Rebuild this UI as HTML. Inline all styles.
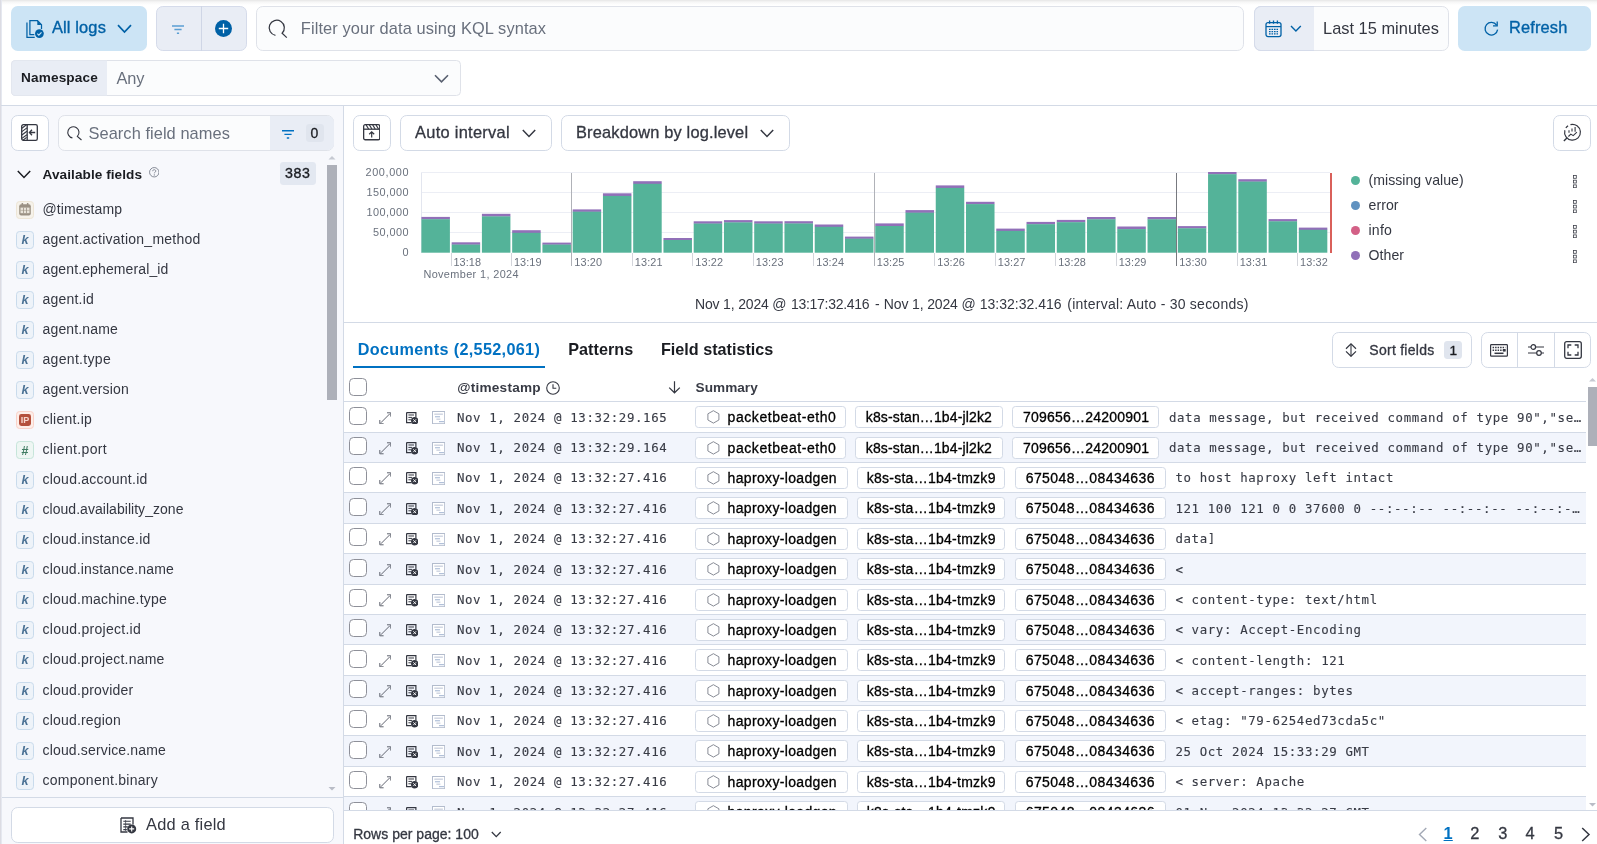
<!DOCTYPE html>
<html lang="en"><head><meta charset="utf-8"><title>Discover - Logs Explorer</title>
<style>
html,body{margin:0;padding:0;}
body{width:1597px;height:844px;position:relative;overflow:hidden;background:#fff;font-family:"Liberation Sans",sans-serif;}
.b{position:absolute;box-sizing:border-box;}
.t{position:absolute;white-space:nowrap;}
.s{font-family:"Liberation Sans",sans-serif;}
.m{font-family:"DejaVu Sans Mono","Liberation Mono",monospace;}
#root{position:absolute;left:0;top:0;width:1597px;height:844px;will-change:transform;}
</style></head><body><div id="root">
<div class="b" style="left:0.00px;top:0.00px;width:1597.00px;height:5.00px;background:linear-gradient(#e6e6e6,#f6f6f6 40%,#fff)"></div>
<div class="b" style="left:0.00px;top:0.00px;width:2.00px;height:844.00px;background:#e5e8f0"></div>
<div class="b" style="left:0.00px;top:0.00px;width:1.00px;height:844.00px;background:#dcdce3"></div>
<div class="b" style="left:11.00px;top:6.00px;width:136.00px;height:45.00px;background:#cce4f5;border-radius:6.75px"></div>
<svg class="b" style="left:25.50px;top:20.00px;" width="18.00" height="18.00" viewBox="0 0 18 18"><path d="M8.300 14.600H3.900V.7h7.600l4 4v4.300" fill="none" stroke="#0061a6" stroke-width="1.250"/><path d="M11.300 .8v4.100h4.100z" fill="#0061a6"/><path d="M.95 2.600v14.800h7.800" fill="none" stroke="#0061a6" stroke-width="1.250"/><circle cx="13.400" cy="13.600" r="4.400" fill="#0061a6"/><path d="M11.300 13.700l1.500 1.500 2.700-2.900" fill="none" stroke="#cce4f5" stroke-width="1.150"/></svg>
<div class="t s" style="left:52.00px;top:16.40px;font-size:16.40px;line-height:23px;letter-spacing:0.141px;font-weight:400;color:#0061a6;-webkit-text-stroke:0.35px #0061a6">All logs</div>
<svg class="b" style="left:116.50px;top:24.30px;" width="15.00" height="10.00" viewBox="0 0 15 10"><path d="M1 1.200l6.500 6.800 6.500-6.800" fill="none" stroke="#0061a6" stroke-width="1.700"/></svg>
<div class="b" style="left:156.00px;top:6.00px;width:91.00px;height:45.00px;background:#e9edf5;border:1px solid #d5dbea;border-radius:6.75px"></div>
<div class="b" style="left:201.00px;top:6.00px;width:1.00px;height:45.00px;background:#cfd6e6"></div>
<svg class="b" style="left:172.00px;top:25.00px;" width="12.00" height="9.50" viewBox="0 0 12 9.5"><path d="M0 .9h12M2.4 4.6h7.2M4.9 8.3h2.2" stroke="#5b9fd3" stroke-width="1.5" fill="none"/></svg>
<svg class="b" style="left:215.00px;top:20.00px;" width="17.00" height="17.00" viewBox="0 0 17 17"><circle cx="8.5" cy="8.5" r="8.5" fill="#0061a6"/><path d="M8.5 3.8v9.4M3.8 8.5h9.4" stroke="#fff" stroke-width="1.3"/></svg>
<div class="b" style="left:256.00px;top:6.00px;width:988.00px;height:45.00px;background:#fbfcfd;border:1px solid #dfe2e9;border-radius:6.75px"></div>
<svg class="b" style="left:266.00px;top:18.00px;" width="24.00" height="22.00" viewBox="0 0 24 22"><path d="M9.43 17.33A7.60 7.60 0 1 1 16.12 15.22L20.80 19.60" fill="none" stroke="#343741" stroke-width="1.25"/></svg>
<div class="t s" style="left:300.80px;top:16.60px;font-size:16.40px;line-height:23px;letter-spacing:0.110px;font-weight:400;color:#69707d;">Filter your data using KQL syntax</div>
<div class="b" style="left:1254.00px;top:6.00px;width:195.00px;height:45.00px;background:#fbfcfd;border:1px solid #dfe2e9;border-radius:6.75px"></div>
<div class="b" style="left:1254.00px;top:6.00px;width:60.00px;height:45.00px;background:#e9edf5;border:1px solid #d5dbea;border-right:none;border-radius:6.75px 0 0 6.75px"></div>
<svg class="b" style="left:1264.50px;top:19.50px;" width="17.00" height="18.00" viewBox="0 0 17 18"><rect x="1" y="2.6" width="15" height="14" rx="2" fill="none" stroke="#0061a6" stroke-width="1.3"/><path d="M1 6.6h15" stroke="#0061a6" stroke-width="1.2"/><path d="M4.6 .6v3.2M8.5 .6v3.2M12.4 .6v3.2" stroke="#0061a6" stroke-width="1.3"/><path d="M4 9.3h9M4 11.6h9M4 13.9h9" stroke="#0061a6" stroke-width="1.3" stroke-dasharray="1.6 0.9"/></svg>
<svg class="b" style="left:1290.00px;top:24.80px;" width="12.00" height="7.50" viewBox="0 0 12 7.500"><path d="M1 1l4.900 4.900L10.800 1" fill="none" stroke="#0061a6" stroke-width="1.400"/></svg>
<div class="t s" style="left:1323.00px;top:16.60px;font-size:16.40px;line-height:23px;letter-spacing:0.015px;font-weight:400;color:#343741;">Last 15 minutes</div>
<div class="b" style="left:1458.00px;top:6.00px;width:133.00px;height:45.00px;background:#cce4f5;border-radius:6.75px"></div>
<svg class="b" style="left:1483.00px;top:20.00px;" width="16.00" height="17.00" viewBox="0 0 16 17"><path d="M13.6 5.2A6.3 6.3 0 1 0 14.6 9.6" fill="none" stroke="#0061a6" stroke-width="1.3"/><path d="M14.2 1.6v4.2h-4.2" fill="none" stroke="#0061a6" stroke-width="1.3"/></svg>
<div class="t s" style="left:1509.00px;top:16.40px;font-size:16.40px;line-height:23px;letter-spacing:0.153px;font-weight:400;color:#0061a6;-webkit-text-stroke:0.35px #0061a6">Refresh</div>
<div class="b" style="left:11.00px;top:60.00px;width:450.00px;height:36.00px;background:#fbfcfd;border:1px solid #dfe2e9;border-radius:4.5px"></div>
<div class="b" style="left:11.00px;top:60.00px;width:96.00px;height:36.00px;background:#e9edf5;border-radius:4.5px 0 0 4.5px;border:1px solid #e3e7ef;border-right:none"></div>
<div class="t s" style="left:21.00px;top:68.00px;font-size:13.60px;line-height:19px;letter-spacing:0.155px;font-weight:700;color:#1a1c21;">Namespace</div>
<div class="t s" style="left:116.50px;top:66.50px;font-size:16.40px;line-height:23px;letter-spacing:-0.087px;font-weight:400;color:#69707d;">Any</div>
<svg class="b" style="left:434.40px;top:74.00px;" width="15.00" height="9.50" viewBox="0 0 15 9.500"><path d="M1 1.200l6.500 6.600 6.500-6.600" fill="none" stroke="#596070" stroke-width="1.600"/></svg>
<div class="b" style="left:1.00px;top:105.00px;width:1596.00px;height:1.00px;background:#d3dae6"></div>
<div class="b" style="left:2.00px;top:106.00px;width:341.00px;height:738.00px;background:#f7f8fc"></div>
<div class="b" style="left:343.00px;top:106.00px;width:1.00px;height:738.00px;background:#d3dae6"></div>
<div class="b" style="left:11.00px;top:115.00px;width:37.50px;height:36.00px;background:#fff;border:1px solid #d3dae6;border-radius:6.75px"></div>
<svg class="b" style="left:21.00px;top:124.00px;" width="17.00" height="17.00" viewBox="0 0 17 17"><rect x=".7" y=".7" width="15.6" height="15.6" rx="1.6" fill="none" stroke="#343741" stroke-width="1.3"/><path d="M6.2 .7v15.6" stroke="#343741" stroke-width="1.3"/><path d="M.9 4.2l4.6-3.4M.9 7.6l5-3.7M.9 11l5-3.7M.9 14.4l5-3.7M2 16.2l3.6-2.8" stroke="#343741" stroke-width="1.1"/><path d="M14.2 8.5H8.6M11 5.8L8.4 8.5l2.6 2.7" fill="none" stroke="#343741" stroke-width="1.3"/></svg>
<div class="b" style="left:58.00px;top:115.00px;width:276.00px;height:36.00px;background:#fbfcfd;border:1px solid #dfe2e9;border-radius:6.75px"></div>
<div class="b" style="left:270.00px;top:116.00px;width:63.50px;height:34.00px;background:#e9edf5;border-radius:0 6px 6px 0"></div>
<svg class="b" style="left:66.00px;top:124.00px;" width="18.00" height="18.00" viewBox="0 0 18 18"><path d="M6.43 13.91A5.60 5.60 0 1 1 11.36 12.36L15.50 16.00" fill="none" stroke="#343741" stroke-width="1.1"/></svg>
<div class="t s" style="left:88.50px;top:121.50px;font-size:16.40px;line-height:23px;letter-spacing:0.062px;font-weight:400;color:#69707d;">Search field names</div>
<svg class="b" style="left:282.00px;top:129.50px;" width="12.00" height="9.00" viewBox="0 0 12 9"><path d="M0 .8h12M2.4 4.4h7.2M4.8 8h2.4" stroke="#0071c2" stroke-width="1.4" fill="none"/></svg>
<div class="b" style="left:306.00px;top:124.00px;width:17.50px;height:18.00px;background:#e0e5ee;border-radius:3.4px"></div>
<div class="t s" style="left:310.50px;top:123.00px;font-size:14.00px;line-height:20px;letter-spacing:0.014px;font-weight:400;color:#1a1c21;-webkit-text-stroke:0.3px #1a1c21">0</div>
<svg class="b" style="left:17.00px;top:170.00px;" width="14.00" height="9.00" viewBox="0 0 14 9"><path d="M.8 1l6.2 6.4L13.2 1" fill="none" stroke="#1a1c21" stroke-width="1.5"/></svg>
<div class="t s" style="left:42.60px;top:164.80px;font-size:13.60px;line-height:19px;letter-spacing:0.062px;font-weight:700;color:#1a1c21;">Available fields</div>
<svg class="b" style="left:148.50px;top:167.00px;" width="10.50" height="10.50" viewBox="0 0 10.5 10.5"><circle cx="5.25" cy="5.25" r="4.7" fill="none" stroke="#69707d" stroke-width=".8"/><path d="M3.7 4.2c0-1 .7-1.5 1.6-1.5s1.5.6 1.5 1.4c0 1.100-1.500 1.100-1.500 2.200" fill="none" stroke="#69707d" stroke-width=".8"/><circle cx="5.3" cy="7.9" r=".55" fill="#69707d"/></svg>
<div class="b" style="left:280.00px;top:162.00px;width:36.00px;height:22.50px;background:#e3e8f1;border-radius:3.4px"></div>
<div class="t s" style="left:285.00px;top:163.10px;font-size:14.20px;line-height:20px;letter-spacing:0.602px;font-weight:400;color:#1a1c21;-webkit-text-stroke:0.35px #1a1c21">383</div>
<svg class="b" style="left:327.00px;top:154.30px;" width="10.00" height="6.00" viewBox="0 0 10 6"><path d="M1.5 5.5L5 2l3.500 3.500z" fill="#c6c9d2"/></svg>
<div class="b" style="left:327.30px;top:165.00px;width:9.70px;height:234.50px;background:#adb0b9"></div>
<svg class="b" style="left:327.00px;top:786.00px;" width="10.00" height="6.00" viewBox="0 0 10 6"><path d="M1.5 1L5 4.5 8.500 1z" fill="#b9bcc6"/></svg>
<div class="b" style="left:16.20px;top:201.05px;width:17.60px;height:17.60px;background:#f6f2ea;border:1px solid #ede5d6;border-radius:3.6px"></div>
<svg class="b" style="left:19.00px;top:203.25px;" width="12.00" height="12.60" viewBox="0 0 12 12.6"><rect x=".2" y="1.3" width="11.6" height="11.1" rx="2" fill="#9b9184"/><rect x="2.6" y="0" width="1.500" height="2.400" fill="#9b9184"/><rect x="7.900" y="0" width="1.500" height="2.400" fill="#9b9184"/><rect x="1.5" y="4.6" width="9" height="5.6" fill="#e9e4da"/><path d="M4.500 4.600v5.600M7.500 4.600v5.600" stroke="#9b9184" stroke-width=".8"/><path d="M1.5 7.4h9" stroke="#9b9184" stroke-width=".5"/></svg>
<div class="t s" style="left:42.50px;top:198.95px;font-size:14.00px;line-height:20px;letter-spacing:0.071px;font-weight:400;color:#343741;">@timestamp</div>
<div class="b" style="left:16.20px;top:231.05px;width:17.60px;height:17.60px;background:#eef3f9;border:1px solid #c9dbec;border-radius:3.6px"></div>
<div class="t s" style="left:21.60px;top:230.55px;font-size:12.60px;line-height:18px;letter-spacing:-0.408px;font-weight:700;color:#4a7194;font-style:italic">k</div>
<div class="t s" style="left:42.50px;top:228.95px;font-size:14.00px;line-height:20px;letter-spacing:0.237px;font-weight:400;color:#343741;">agent.activation_method</div>
<div class="b" style="left:16.20px;top:261.05px;width:17.60px;height:17.60px;background:#eef3f9;border:1px solid #c9dbec;border-radius:3.6px"></div>
<div class="t s" style="left:21.60px;top:260.55px;font-size:12.60px;line-height:18px;letter-spacing:-0.408px;font-weight:700;color:#4a7194;font-style:italic">k</div>
<div class="t s" style="left:42.50px;top:258.95px;font-size:14.00px;line-height:20px;letter-spacing:0.124px;font-weight:400;color:#343741;">agent.ephemeral_id</div>
<div class="b" style="left:16.20px;top:291.05px;width:17.60px;height:17.60px;background:#eef3f9;border:1px solid #c9dbec;border-radius:3.6px"></div>
<div class="t s" style="left:21.60px;top:290.55px;font-size:12.60px;line-height:18px;letter-spacing:-0.408px;font-weight:700;color:#4a7194;font-style:italic">k</div>
<div class="t s" style="left:42.50px;top:288.95px;font-size:14.00px;line-height:20px;letter-spacing:0.210px;font-weight:400;color:#343741;">agent.id</div>
<div class="b" style="left:16.20px;top:321.05px;width:17.60px;height:17.60px;background:#eef3f9;border:1px solid #c9dbec;border-radius:3.6px"></div>
<div class="t s" style="left:21.60px;top:320.55px;font-size:12.60px;line-height:18px;letter-spacing:-0.408px;font-weight:700;color:#4a7194;font-style:italic">k</div>
<div class="t s" style="left:42.50px;top:318.95px;font-size:14.00px;line-height:20px;letter-spacing:0.155px;font-weight:400;color:#343741;">agent.name</div>
<div class="b" style="left:16.20px;top:351.05px;width:17.60px;height:17.60px;background:#eef3f9;border:1px solid #c9dbec;border-radius:3.6px"></div>
<div class="t s" style="left:21.60px;top:350.55px;font-size:12.60px;line-height:18px;letter-spacing:-0.408px;font-weight:700;color:#4a7194;font-style:italic">k</div>
<div class="t s" style="left:42.50px;top:348.95px;font-size:14.00px;line-height:20px;letter-spacing:0.311px;font-weight:400;color:#343741;">agent.type</div>
<div class="b" style="left:16.20px;top:381.05px;width:17.60px;height:17.60px;background:#eef3f9;border:1px solid #c9dbec;border-radius:3.6px"></div>
<div class="t s" style="left:21.60px;top:380.55px;font-size:12.60px;line-height:18px;letter-spacing:-0.408px;font-weight:700;color:#4a7194;font-style:italic">k</div>
<div class="t s" style="left:42.50px;top:378.95px;font-size:14.00px;line-height:20px;letter-spacing:0.188px;font-weight:400;color:#343741;">agent.version</div>
<div class="b" style="left:16.20px;top:411.05px;width:17.60px;height:17.60px;background:#fdeee9;border:1px solid #f9d2c8;border-radius:3.6px"></div>
<div class="b" style="left:19.20px;top:414.05px;width:11.40px;height:11.50px;background:#b4503c;border-radius:2.4px"></div>
<div class="t s" style="left:20.80px;top:413.65px;font-size:9.00px;line-height:13px;letter-spacing:-0.052px;font-weight:700;color:#f7d5cc;">IP</div>
<div class="t s" style="left:42.50px;top:408.95px;font-size:14.00px;line-height:20px;letter-spacing:0.226px;font-weight:400;color:#343741;">client.ip</div>
<div class="b" style="left:16.20px;top:441.05px;width:17.60px;height:17.60px;background:#eef6f3;border:1px solid #c6e5da;border-radius:3.6px"></div>
<div class="t s" style="left:21.20px;top:441.65px;font-size:12.60px;line-height:18px;letter-spacing:0.392px;font-weight:700;color:#3f7b62;font-style:italic">#</div>
<div class="t s" style="left:42.50px;top:438.95px;font-size:14.00px;line-height:20px;letter-spacing:0.346px;font-weight:400;color:#343741;">client.port</div>
<div class="b" style="left:16.20px;top:471.05px;width:17.60px;height:17.60px;background:#eef3f9;border:1px solid #c9dbec;border-radius:3.6px"></div>
<div class="t s" style="left:21.60px;top:470.55px;font-size:12.60px;line-height:18px;letter-spacing:-0.408px;font-weight:700;color:#4a7194;font-style:italic">k</div>
<div class="t s" style="left:42.50px;top:468.95px;font-size:14.00px;line-height:20px;letter-spacing:0.239px;font-weight:400;color:#343741;">cloud.account.id</div>
<div class="b" style="left:16.20px;top:501.05px;width:17.60px;height:17.60px;background:#eef3f9;border:1px solid #c9dbec;border-radius:3.6px"></div>
<div class="t s" style="left:21.60px;top:500.55px;font-size:12.60px;line-height:18px;letter-spacing:-0.408px;font-weight:700;color:#4a7194;font-style:italic">k</div>
<div class="t s" style="left:42.50px;top:498.95px;font-size:14.00px;line-height:20px;letter-spacing:0.039px;font-weight:400;color:#343741;">cloud.availability_zone</div>
<div class="b" style="left:16.20px;top:531.05px;width:17.60px;height:17.60px;background:#eef3f9;border:1px solid #c9dbec;border-radius:3.6px"></div>
<div class="t s" style="left:21.60px;top:530.55px;font-size:12.60px;line-height:18px;letter-spacing:-0.408px;font-weight:700;color:#4a7194;font-style:italic">k</div>
<div class="t s" style="left:42.50px;top:528.95px;font-size:14.00px;line-height:20px;letter-spacing:0.218px;font-weight:400;color:#343741;">cloud.instance.id</div>
<div class="b" style="left:16.20px;top:561.05px;width:17.60px;height:17.60px;background:#eef3f9;border:1px solid #c9dbec;border-radius:3.6px"></div>
<div class="t s" style="left:21.60px;top:560.55px;font-size:12.60px;line-height:18px;letter-spacing:-0.408px;font-weight:700;color:#4a7194;font-style:italic">k</div>
<div class="t s" style="left:42.50px;top:558.95px;font-size:14.00px;line-height:20px;letter-spacing:0.162px;font-weight:400;color:#343741;">cloud.instance.name</div>
<div class="b" style="left:16.20px;top:591.05px;width:17.60px;height:17.60px;background:#eef3f9;border:1px solid #c9dbec;border-radius:3.6px"></div>
<div class="t s" style="left:21.60px;top:590.55px;font-size:12.60px;line-height:18px;letter-spacing:-0.408px;font-weight:700;color:#4a7194;font-style:italic">k</div>
<div class="t s" style="left:42.50px;top:588.95px;font-size:14.00px;line-height:20px;letter-spacing:0.215px;font-weight:400;color:#343741;">cloud.machine.type</div>
<div class="b" style="left:16.20px;top:621.05px;width:17.60px;height:17.60px;background:#eef3f9;border:1px solid #c9dbec;border-radius:3.6px"></div>
<div class="t s" style="left:21.60px;top:620.55px;font-size:12.60px;line-height:18px;letter-spacing:-0.408px;font-weight:700;color:#4a7194;font-style:italic">k</div>
<div class="t s" style="left:42.50px;top:618.95px;font-size:14.00px;line-height:20px;letter-spacing:0.271px;font-weight:400;color:#343741;">cloud.project.id</div>
<div class="b" style="left:16.20px;top:651.05px;width:17.60px;height:17.60px;background:#eef3f9;border:1px solid #c9dbec;border-radius:3.6px"></div>
<div class="t s" style="left:21.60px;top:650.55px;font-size:12.60px;line-height:18px;letter-spacing:-0.408px;font-weight:700;color:#4a7194;font-style:italic">k</div>
<div class="t s" style="left:42.50px;top:648.95px;font-size:14.00px;line-height:20px;letter-spacing:0.206px;font-weight:400;color:#343741;">cloud.project.name</div>
<div class="b" style="left:16.20px;top:682.05px;width:17.60px;height:17.60px;background:#eef3f9;border:1px solid #c9dbec;border-radius:3.6px"></div>
<div class="t s" style="left:21.60px;top:681.55px;font-size:12.60px;line-height:18px;letter-spacing:-0.408px;font-weight:700;color:#4a7194;font-style:italic">k</div>
<div class="t s" style="left:42.50px;top:679.95px;font-size:14.00px;line-height:20px;letter-spacing:0.219px;font-weight:400;color:#343741;">cloud.provider</div>
<div class="b" style="left:16.20px;top:712.05px;width:17.60px;height:17.60px;background:#eef3f9;border:1px solid #c9dbec;border-radius:3.6px"></div>
<div class="t s" style="left:21.60px;top:711.55px;font-size:12.60px;line-height:18px;letter-spacing:-0.408px;font-weight:700;color:#4a7194;font-style:italic">k</div>
<div class="t s" style="left:42.50px;top:709.95px;font-size:14.00px;line-height:20px;letter-spacing:0.185px;font-weight:400;color:#343741;">cloud.region</div>
<div class="b" style="left:16.20px;top:742.05px;width:17.60px;height:17.60px;background:#eef3f9;border:1px solid #c9dbec;border-radius:3.6px"></div>
<div class="t s" style="left:21.60px;top:741.55px;font-size:12.60px;line-height:18px;letter-spacing:-0.408px;font-weight:700;color:#4a7194;font-style:italic">k</div>
<div class="t s" style="left:42.50px;top:739.95px;font-size:14.00px;line-height:20px;letter-spacing:0.160px;font-weight:400;color:#343741;">cloud.service.name</div>
<div class="b" style="left:16.20px;top:772.05px;width:17.60px;height:17.60px;background:#eef3f9;border:1px solid #c9dbec;border-radius:3.6px"></div>
<div class="t s" style="left:21.60px;top:771.55px;font-size:12.60px;line-height:18px;letter-spacing:-0.408px;font-weight:700;color:#4a7194;font-style:italic">k</div>
<div class="t s" style="left:42.50px;top:769.95px;font-size:14.00px;line-height:20px;letter-spacing:0.263px;font-weight:400;color:#343741;">component.binary</div>
<div class="b" style="left:2.00px;top:796.50px;width:341.00px;height:1.00px;background:#d3dae6"></div>
<div class="b" style="left:11.00px;top:807.00px;width:322.50px;height:35.50px;background:#fff;border:1px solid #d3dae6;border-radius:6.75px"></div>
<svg class="b" style="left:120.00px;top:816.50px;" width="17.00" height="17.00" viewBox="0 0 17 17"><path d="M1 1h12v6.500M1 1v14h6.500" fill="none" stroke="#343741" stroke-width="1.300"/><path d="M3.300 4.300h7.400M3.300 7.100h7.400M3.300 9.900h4.500M3.300 12.600h3.500" stroke="#343741" stroke-width="1.100"/><path d="M5.600 3v11" stroke="#40434d" stroke-width=".75"/><circle cx="11.700" cy="11.900" r="4.500" fill="#343741"/><path d="M11.700 9.400v5M9.200 11.900h5" stroke="#fff" stroke-width="1.100"/></svg>
<div class="t s" style="left:146.00px;top:812.60px;font-size:16.40px;line-height:23px;letter-spacing:0.227px;font-weight:400;color:#343741;">Add a field</div>
<div class="b" style="left:353.00px;top:115.00px;width:37.50px;height:36.00px;background:#fff;border:1px solid #d3dae6;border-radius:6.75px"></div>
<svg class="b" style="left:362.80px;top:124.30px;" width="17.40" height="16.40" viewBox="0 0 17.4 16.4"><rect x=".65" y=".65" width="16.1" height="15.1" rx="1.6" fill="none" stroke="#343741" stroke-width="1.3"/><path d="M.65 5.2h16.1" stroke="#343741" stroke-width="1.3"/><path d="M3 .8l2.600 4.200M6.300 .8l2.600 4.200M9.600 .8l2.600 4.200M12.900 .8l2.600 4.200" stroke="#343741" stroke-width="1.200"/><path d="M8.700 13.600V8M6.200 10.300l2.500-2.500 2.500 2.500" fill="none" stroke="#343741" stroke-width="1.200"/></svg>
<div class="b" style="left:400.00px;top:115.00px;width:152.00px;height:36.00px;background:#fff;border:1px solid #d3dae6;border-radius:6.75px"></div>
<div class="t s" style="left:415.00px;top:121.00px;font-size:16.40px;line-height:23px;letter-spacing:0.295px;font-weight:400;color:#343741;-webkit-text-stroke:0.3px #343741">Auto interval</div>
<svg class="b" style="left:522.00px;top:128.50px;" width="14.00" height="9.00" viewBox="0 0 14 9"><path d="M.8 1l6.200 6.400L13.200 1" fill="none" stroke="#343741" stroke-width="1.5"/></svg>
<div class="b" style="left:561.00px;top:115.00px;width:229.00px;height:36.00px;background:#fff;border:1px solid #d3dae6;border-radius:6.75px"></div>
<div class="t s" style="left:576.00px;top:121.00px;font-size:16.40px;line-height:23px;letter-spacing:0.166px;font-weight:400;color:#343741;-webkit-text-stroke:0.3px #343741">Breakdown by log.level</div>
<svg class="b" style="left:760.00px;top:128.50px;" width="14.00" height="9.00" viewBox="0 0 14 9"><path d="M.8 1l6.200 6.400L13.200 1" fill="none" stroke="#343741" stroke-width="1.5"/></svg>
<div class="b" style="left:1553.00px;top:115.00px;width:37.80px;height:36.00px;background:#fff;border:1px solid #d3dae6;border-radius:6.75px"></div>
<svg class="b" style="left:1563.00px;top:123.00px;" width="19.00" height="19.00" viewBox="0 0 19 19"><path d="M7.46 1.67A7.90 7.90 0 1 1 1.87 7.26M2.87 5.00A7.90 7.90 0 0 1 5.08 2.75" fill="none" stroke="#343741" stroke-width="1.2"/><path d="M3.91 14.89L.9 17.9" stroke="#343741" stroke-width="1.4"/><path d="M6 7.200v2.500M9 5.400v3M12.100 4v4.700" stroke="#343741" stroke-width="1.100"/><path d="M5.400 13.500l2.400-2.400 2.400 1.500 3.700-3.400" fill="none" stroke="#343741" stroke-width="1.100"/></svg>
<div class="t s" style="right:1187.77px;top:165.00px;font-size:10.90px;line-height:15px;letter-spacing:0.628px;font-weight:400;color:#6a717d;">200,000</div>
<div class="t s" style="right:1187.96px;top:184.90px;font-size:10.90px;line-height:15px;letter-spacing:0.443px;font-weight:400;color:#6a717d;">150,000</div>
<div class="t s" style="right:1187.96px;top:205.10px;font-size:10.90px;line-height:15px;letter-spacing:0.443px;font-weight:400;color:#6a717d;">100,000</div>
<div class="t s" style="right:1187.96px;top:225.00px;font-size:10.90px;line-height:15px;letter-spacing:0.443px;font-weight:400;color:#6a717d;">50,000</div>
<div class="t s" style="right:1187.16px;top:244.80px;font-size:10.90px;line-height:15px;letter-spacing:1.238px;font-weight:400;color:#6a717d;">0</div>
<div class="b" style="left:421.00px;top:172.00px;width:909.00px;height:1.00px;background:#eceef5"></div>
<div class="b" style="left:421.00px;top:191.90px;width:909.00px;height:1.00px;background:#eceef5"></div>
<div class="b" style="left:421.00px;top:211.90px;width:909.00px;height:1.00px;background:#eceef5"></div>
<div class="b" style="left:421.00px;top:231.90px;width:909.00px;height:1.00px;background:#eceef5"></div>
<div class="b" style="left:421.00px;top:172.50px;width:1.00px;height:80.00px;background:#e3e6ef"></div>
<svg class="b" style="left:0;top:0" width="1597" height="300" viewBox="0 0 1597 300"><rect x="421.40" y="216.90" width="28.5" height="2.50" fill="#9170b8"/><rect x="421.40" y="219.20" width="28.5" height="33.50" fill="#54b399"/><rect x="451.66" y="242.30" width="28.5" height="2.50" fill="#9170b8"/><rect x="451.66" y="244.60" width="28.5" height="8.10" fill="#54b399"/><rect x="481.91" y="213.80" width="28.5" height="2.80" fill="#9170b8"/><rect x="481.91" y="216.40" width="28.5" height="36.30" fill="#54b399"/><rect x="512.17" y="230.20" width="28.5" height="2.80" fill="#9170b8"/><rect x="512.17" y="232.80" width="28.5" height="19.90" fill="#54b399"/><rect x="542.42" y="242.60" width="28.5" height="2.20" fill="#9170b8"/><rect x="542.42" y="244.60" width="28.5" height="8.10" fill="#54b399"/><rect x="572.68" y="209.40" width="28.5" height="2.50" fill="#9170b8"/><rect x="572.68" y="211.70" width="28.5" height="41.00" fill="#54b399"/><rect x="602.94" y="193.30" width="28.5" height="2.80" fill="#9170b8"/><rect x="602.94" y="195.90" width="28.5" height="56.80" fill="#54b399"/><rect x="633.19" y="181.20" width="28.5" height="2.80" fill="#9170b8"/><rect x="633.19" y="183.80" width="28.5" height="68.90" fill="#54b399"/><rect x="663.45" y="238.00" width="28.5" height="2.20" fill="#9170b8"/><rect x="663.45" y="240.00" width="28.5" height="12.70" fill="#54b399"/><rect x="693.70" y="221.30" width="28.5" height="2.50" fill="#9170b8"/><rect x="693.70" y="223.60" width="28.5" height="29.10" fill="#54b399"/><rect x="723.96" y="220.10" width="28.5" height="2.50" fill="#9170b8"/><rect x="723.96" y="222.40" width="28.5" height="30.30" fill="#54b399"/><rect x="754.22" y="221.30" width="28.5" height="2.50" fill="#9170b8"/><rect x="754.22" y="223.60" width="28.5" height="29.10" fill="#54b399"/><rect x="784.47" y="221.20" width="28.5" height="2.50" fill="#9170b8"/><rect x="784.47" y="223.50" width="28.5" height="29.20" fill="#54b399"/><rect x="814.73" y="224.50" width="28.5" height="2.50" fill="#9170b8"/><rect x="814.73" y="226.80" width="28.5" height="25.90" fill="#54b399"/><rect x="844.98" y="236.60" width="28.5" height="2.30" fill="#9170b8"/><rect x="844.98" y="238.70" width="28.5" height="14.00" fill="#54b399"/><rect x="875.24" y="223.40" width="28.5" height="2.80" fill="#9170b8"/><rect x="875.24" y="226.00" width="28.5" height="26.70" fill="#54b399"/><rect x="905.50" y="210.10" width="28.5" height="2.80" fill="#9170b8"/><rect x="905.50" y="212.70" width="28.5" height="40.00" fill="#54b399"/><rect x="935.75" y="185.40" width="28.5" height="2.70" fill="#9170b8"/><rect x="935.75" y="187.90" width="28.5" height="64.80" fill="#54b399"/><rect x="966.01" y="201.80" width="28.5" height="2.50" fill="#9170b8"/><rect x="966.01" y="204.10" width="28.5" height="48.60" fill="#54b399"/><rect x="996.26" y="228.60" width="28.5" height="2.50" fill="#9170b8"/><rect x="996.26" y="230.90" width="28.5" height="21.80" fill="#54b399"/><rect x="1026.52" y="221.90" width="28.5" height="2.50" fill="#9170b8"/><rect x="1026.52" y="224.20" width="28.5" height="28.50" fill="#54b399"/><rect x="1056.78" y="219.90" width="28.5" height="2.50" fill="#9170b8"/><rect x="1056.78" y="222.20" width="28.5" height="30.50" fill="#54b399"/><rect x="1087.03" y="217.00" width="28.5" height="2.50" fill="#9170b8"/><rect x="1087.03" y="219.30" width="28.5" height="33.40" fill="#54b399"/><rect x="1117.29" y="226.50" width="28.5" height="2.80" fill="#9170b8"/><rect x="1117.29" y="229.10" width="28.5" height="23.60" fill="#54b399"/><rect x="1147.54" y="217.00" width="28.5" height="2.50" fill="#9170b8"/><rect x="1147.54" y="219.30" width="28.5" height="33.40" fill="#54b399"/><rect x="1177.80" y="226.10" width="28.5" height="2.40" fill="#9170b8"/><rect x="1177.80" y="228.30" width="28.5" height="24.40" fill="#54b399"/><rect x="1208.06" y="172.00" width="28.5" height="2.40" fill="#9170b8"/><rect x="1208.06" y="174.20" width="28.5" height="78.50" fill="#54b399"/><rect x="1238.31" y="179.20" width="28.5" height="2.60" fill="#9170b8"/><rect x="1238.31" y="181.60" width="28.5" height="71.10" fill="#54b399"/><rect x="1268.57" y="219.10" width="28.5" height="2.40" fill="#9170b8"/><rect x="1268.57" y="221.30" width="28.5" height="31.40" fill="#54b399"/><rect x="1298.82" y="227.60" width="28.5" height="2.40" fill="#9170b8"/><rect x="1298.82" y="229.80" width="28.5" height="22.90" fill="#54b399"/></svg>
<div class="b" style="left:451.00px;top:252.50px;width:1.00px;height:13.50px;background:#d3d5db"></div>
<div class="t s" style="left:453.40px;top:255.10px;font-size:10.90px;line-height:15px;letter-spacing:0.105px;font-weight:400;color:#6a717d;">13:18</div>
<div class="b" style="left:511.00px;top:252.50px;width:1.00px;height:13.50px;background:#d3d5db"></div>
<div class="t s" style="left:513.88px;top:255.10px;font-size:10.90px;line-height:15px;letter-spacing:0.105px;font-weight:400;color:#6a717d;">13:19</div>
<div class="b" style="left:571.00px;top:172.50px;width:1.00px;height:93.50px;background:#b0b2b8"></div>
<div class="t s" style="left:574.36px;top:255.10px;font-size:10.90px;line-height:15px;letter-spacing:0.105px;font-weight:400;color:#6a717d;">13:20</div>
<div class="b" style="left:632.00px;top:252.50px;width:1.00px;height:13.50px;background:#d3d5db"></div>
<div class="t s" style="left:634.84px;top:255.10px;font-size:10.90px;line-height:15px;letter-spacing:0.105px;font-weight:400;color:#6a717d;">13:21</div>
<div class="b" style="left:692.00px;top:252.50px;width:1.00px;height:13.50px;background:#d3d5db"></div>
<div class="t s" style="left:695.32px;top:255.10px;font-size:10.90px;line-height:15px;letter-spacing:0.105px;font-weight:400;color:#6a717d;">13:22</div>
<div class="b" style="left:753.00px;top:252.50px;width:1.00px;height:13.50px;background:#d3d5db"></div>
<div class="t s" style="left:755.80px;top:255.10px;font-size:10.90px;line-height:15px;letter-spacing:0.105px;font-weight:400;color:#6a717d;">13:23</div>
<div class="b" style="left:813.00px;top:252.50px;width:1.00px;height:13.50px;background:#d3d5db"></div>
<div class="t s" style="left:816.28px;top:255.10px;font-size:10.90px;line-height:15px;letter-spacing:0.105px;font-weight:400;color:#6a717d;">13:24</div>
<div class="b" style="left:874.00px;top:172.50px;width:1.00px;height:93.50px;background:#b0b2b8"></div>
<div class="t s" style="left:876.76px;top:255.10px;font-size:10.90px;line-height:15px;letter-spacing:0.105px;font-weight:400;color:#6a717d;">13:25</div>
<div class="b" style="left:934.00px;top:252.50px;width:1.00px;height:13.50px;background:#d3d5db"></div>
<div class="t s" style="left:937.24px;top:255.10px;font-size:10.90px;line-height:15px;letter-spacing:0.105px;font-weight:400;color:#6a717d;">13:26</div>
<div class="b" style="left:995.00px;top:252.50px;width:1.00px;height:13.50px;background:#d3d5db"></div>
<div class="t s" style="left:997.72px;top:255.10px;font-size:10.90px;line-height:15px;letter-spacing:0.105px;font-weight:400;color:#6a717d;">13:27</div>
<div class="b" style="left:1055.00px;top:252.50px;width:1.00px;height:13.50px;background:#d3d5db"></div>
<div class="t s" style="left:1058.20px;top:255.10px;font-size:10.90px;line-height:15px;letter-spacing:0.105px;font-weight:400;color:#6a717d;">13:28</div>
<div class="b" style="left:1116.00px;top:252.50px;width:1.00px;height:13.50px;background:#d3d5db"></div>
<div class="t s" style="left:1118.68px;top:255.10px;font-size:10.90px;line-height:15px;letter-spacing:0.105px;font-weight:400;color:#6a717d;">13:29</div>
<div class="b" style="left:1176.00px;top:172.50px;width:1.00px;height:93.50px;background:#77797f"></div>
<div class="t s" style="left:1179.16px;top:255.10px;font-size:10.90px;line-height:15px;letter-spacing:0.105px;font-weight:400;color:#6a717d;">13:30</div>
<div class="b" style="left:1237.00px;top:252.50px;width:1.00px;height:13.50px;background:#d3d5db"></div>
<div class="t s" style="left:1239.64px;top:255.10px;font-size:10.90px;line-height:15px;letter-spacing:0.105px;font-weight:400;color:#6a717d;">13:31</div>
<div class="b" style="left:1297.00px;top:252.50px;width:1.00px;height:13.50px;background:#d3d5db"></div>
<div class="t s" style="left:1300.12px;top:255.10px;font-size:10.90px;line-height:15px;letter-spacing:0.105px;font-weight:400;color:#6a717d;">13:32</div>
<div class="t s" style="left:423.40px;top:266.80px;font-size:10.90px;line-height:15px;letter-spacing:0.370px;font-weight:400;color:#6a717d;">November 1, 2024</div>
<div class="b" style="left:1330.00px;top:172.50px;width:2.00px;height:80.00px;background:#d9605a"></div>
<div class="b" style="left:1350.60px;top:176.40px;width:9.00px;height:9.00px;background:#54b399;border-radius:50%"></div>
<div class="t s" style="left:1368.50px;top:170.20px;font-size:14.10px;line-height:20px;letter-spacing:0.026px;font-weight:400;color:#343741;">(missing value)</div>
<svg class="b" style="left:1573.10px;top:175.00px;" width="4.00" height="13.40" viewBox="0 0 4 13.400"><rect x=".5" y=".5" width="2.800" height="2.800" fill="none" stroke="#3d404a" stroke-width=".8"/><rect x=".5" y="5.200" width="2.800" height="2.800" fill="none" stroke="#3d404a" stroke-width=".8"/><rect x=".5" y="9.900" width="2.800" height="2.800" fill="none" stroke="#3d404a" stroke-width=".8"/></svg>
<div class="b" style="left:1350.60px;top:201.40px;width:9.00px;height:9.00px;background:#6092c0;border-radius:50%"></div>
<div class="t s" style="left:1368.50px;top:195.20px;font-size:14.10px;line-height:20px;letter-spacing:0.066px;font-weight:400;color:#343741;">error</div>
<svg class="b" style="left:1573.10px;top:200.00px;" width="4.00" height="13.40" viewBox="0 0 4 13.400"><rect x=".5" y=".5" width="2.800" height="2.800" fill="none" stroke="#3d404a" stroke-width=".8"/><rect x=".5" y="5.200" width="2.800" height="2.800" fill="none" stroke="#3d404a" stroke-width=".8"/><rect x=".5" y="9.900" width="2.800" height="2.800" fill="none" stroke="#3d404a" stroke-width=".8"/></svg>
<div class="b" style="left:1350.60px;top:226.40px;width:9.00px;height:9.00px;background:#d36086;border-radius:50%"></div>
<div class="t s" style="left:1368.50px;top:220.20px;font-size:14.10px;line-height:20px;letter-spacing:0.216px;font-weight:400;color:#343741;">info</div>
<svg class="b" style="left:1573.10px;top:225.00px;" width="4.00" height="13.40" viewBox="0 0 4 13.400"><rect x=".5" y=".5" width="2.800" height="2.800" fill="none" stroke="#3d404a" stroke-width=".8"/><rect x=".5" y="5.200" width="2.800" height="2.800" fill="none" stroke="#3d404a" stroke-width=".8"/><rect x=".5" y="9.900" width="2.800" height="2.800" fill="none" stroke="#3d404a" stroke-width=".8"/></svg>
<div class="b" style="left:1350.60px;top:251.40px;width:9.00px;height:9.00px;background:#9170b8;border-radius:50%"></div>
<div class="t s" style="left:1368.50px;top:245.20px;font-size:14.10px;line-height:20px;letter-spacing:0.067px;font-weight:400;color:#343741;">Other</div>
<svg class="b" style="left:1573.10px;top:250.00px;" width="4.00" height="13.40" viewBox="0 0 4 13.400"><rect x=".5" y=".5" width="2.800" height="2.800" fill="none" stroke="#3d404a" stroke-width=".8"/><rect x=".5" y="5.200" width="2.800" height="2.800" fill="none" stroke="#3d404a" stroke-width=".8"/><rect x=".5" y="9.900" width="2.800" height="2.800" fill="none" stroke="#3d404a" stroke-width=".8"/></svg>
<div class="t s" style="left:695.00px;top:294.40px;font-size:14.00px;line-height:20px;letter-spacing:-0.169px;font-weight:400;color:#343741;">Nov 1, 2024 @</div>
<div class="t s" style="left:791.00px;top:294.40px;font-size:14.00px;line-height:20px;letter-spacing:-0.295px;font-weight:400;color:#343741;">13:17:32.416</div>
<div class="t s" style="left:874.90px;top:294.40px;font-size:14.00px;line-height:20px;letter-spacing:-0.363px;font-weight:400;color:#343741;">-</div>
<div class="t s" style="left:883.80px;top:294.40px;font-size:14.00px;line-height:20px;letter-spacing:-0.146px;font-weight:400;color:#343741;">Nov 1, 2024 @</div>
<div class="t s" style="left:979.80px;top:294.40px;font-size:14.00px;line-height:20px;letter-spacing:-0.004px;font-weight:400;color:#343741;">13:32:32.416</div>
<div class="t s" style="left:1067.30px;top:294.40px;font-size:14.00px;line-height:20px;letter-spacing:0.241px;font-weight:400;color:#343741;">(interval: Auto - 30 seconds)</div>
<div class="b" style="left:343.00px;top:322.00px;width:1254.00px;height:1.00px;background:#d3dae6"></div>
<div class="t s" style="left:357.70px;top:337.70px;font-size:16.20px;line-height:23px;letter-spacing:0.334px;font-weight:700;color:#0071c2;">Documents (2,552,061)</div>
<div class="b" style="left:353.00px;top:365.70px;width:192.00px;height:2.30px;background:#0071c2"></div>
<div class="t s" style="left:568.20px;top:337.70px;font-size:16.20px;line-height:23px;letter-spacing:0.047px;font-weight:700;color:#1a1c21;">Patterns</div>
<div class="t s" style="left:661.00px;top:337.70px;font-size:16.20px;line-height:23px;letter-spacing:-0.015px;font-weight:700;color:#1a1c21;">Field statistics</div>
<div class="b" style="left:1332.00px;top:332.00px;width:140.00px;height:36.00px;background:#fff;border:1px solid #d3dae6;border-radius:6.75px"></div>
<svg class="b" style="left:1344.50px;top:343.00px;" width="12.00" height="14.20" viewBox="0 0 12 14.2"><path d="M6 .9v12.400" stroke="#343741" stroke-width="1.100"/><path d="M1 5.800L6 .9l5 4.900M1 8.400l5 4.900 5-4.900" fill="none" stroke="#343741" stroke-width="1.200"/></svg>
<div class="t s" style="left:1369.30px;top:340.20px;font-size:14.00px;line-height:20px;letter-spacing:0.268px;font-weight:400;color:#343741;-webkit-text-stroke:0.3px #343741">Sort fields</div>
<div class="b" style="left:1444.00px;top:341.20px;width:18.00px;height:18.00px;background:#e0e5ee;border-radius:3.4px"></div>
<div class="t s" style="left:1449.60px;top:340.70px;font-size:13.60px;line-height:19px;letter-spacing:-2.064px;font-weight:400;color:#1a1c21;-webkit-text-stroke:0.35px #1a1c21">1</div>
<div class="b" style="left:1481.00px;top:332.00px;width:110.00px;height:36.00px;background:#fff;border:1px solid #d3dae6;border-radius:6.75px"></div>
<div class="b" style="left:1517.00px;top:332.00px;width:1.00px;height:36.00px;background:#d3dae6"></div>
<div class="b" style="left:1554.00px;top:332.00px;width:1.00px;height:36.00px;background:#d3dae6"></div>
<svg class="b" style="left:1490.00px;top:344.20px;" width="18.00" height="12.80" viewBox="0 0 18 12.800"><rect x=".6" y=".6" width="16.800" height="11.600" rx=".8" fill="none" stroke="#343741" stroke-width="1.200"/><path d="M2.600 3.500h12.800M2.600 6.200h12.800" stroke="#343741" stroke-width="1.500" stroke-dasharray="1.500 1"/><path d="M4.500 9.300h9" stroke="#343741" stroke-width="1.500"/><rect x="13" y="5" width="2.600" height="2.600" fill="#343741"/></svg>
<svg class="b" style="left:1528.00px;top:344.30px;" width="16.40" height="12.00" viewBox="0 0 16.400 12"><path d="M0 3h16.400M0 9h16.400" stroke="#343741" stroke-width="1.200"/><circle cx="5.300" cy="3" r="2.300" fill="#fff" stroke="#343741" stroke-width="1.200"/><circle cx="11" cy="9" r="2.300" fill="#fff" stroke="#343741" stroke-width="1.200"/></svg>
<svg class="b" style="left:1564.00px;top:340.80px;" width="18.00" height="18.00" viewBox="0 0 18 18"><rect x=".7" y=".7" width="16.600" height="16.600" rx="2" fill="none" stroke="#343741" stroke-width="1.300"/><path d="M4 7.300V4h3.300M10.700 4H14v3.300M14 10.700V14h-3.300M7.300 14H4v-3.300" fill="none" stroke="#343741" stroke-width="1.300"/></svg>
<div class="b" style="left:349.20px;top:378.40px;width:17.60px;height:17.60px;background:#fff;border:1px solid #8e9099;border-radius:4.5px"></div>
<div class="t s" style="left:457.20px;top:377.90px;font-size:13.60px;line-height:19px;letter-spacing:0.242px;font-weight:700;color:#383b45;">@timestamp</div>
<svg class="b" style="left:545.80px;top:380.80px;" width="14.00" height="14.00" viewBox="0 0 14 14"><circle cx="7" cy="7" r="6.300" fill="none" stroke="#343741" stroke-width="1.100"/><path d="M7 3.200V7.300h3.300" fill="none" stroke="#343741" stroke-width="1.100"/></svg>
<svg class="b" style="left:668.00px;top:381.30px;" width="13.00" height="12.50" viewBox="0 0 13 12.500"><path d="M6.500 .3v11M1.200 6.600l5.300 5.200 5.300-5.200" fill="none" stroke="#343741" stroke-width="1.200"/></svg>
<div class="t s" style="left:695.60px;top:377.90px;font-size:13.60px;line-height:19px;letter-spacing:0.031px;font-weight:700;color:#383b45;">Summary</div>
<div class="b" style="left:343.00px;top:401.00px;width:1243.00px;height:1.00px;background:#d3dae6"></div>
<div class="b" style="left:343px;top:402px;width:1254px;height:408px;overflow:hidden">
<div class="b" style="left:1.00px;top:30.00px;width:1242.00px;height:1.00px;background:#d3dae6"></div>
<div class="b" style="left:1.00px;top:31.00px;width:1242.00px;height:29.00px;background:#f2f5fc"></div>
<div class="b" style="left:1.00px;top:60.00px;width:1242.00px;height:1.00px;background:#d3dae6"></div>
<div class="b" style="left:1.00px;top:90.00px;width:1242.00px;height:1.00px;background:#d3dae6"></div>
<div class="b" style="left:1.00px;top:91.00px;width:1242.00px;height:30.00px;background:#f2f5fc"></div>
<div class="b" style="left:1.00px;top:121.00px;width:1242.00px;height:1.00px;background:#d3dae6"></div>
<div class="b" style="left:1.00px;top:151.00px;width:1242.00px;height:1.00px;background:#d3dae6"></div>
<div class="b" style="left:1.00px;top:152.00px;width:1242.00px;height:30.00px;background:#f2f5fc"></div>
<div class="b" style="left:1.00px;top:182.00px;width:1242.00px;height:1.00px;background:#d3dae6"></div>
<div class="b" style="left:1.00px;top:212.00px;width:1242.00px;height:1.00px;background:#d3dae6"></div>
<div class="b" style="left:1.00px;top:213.00px;width:1242.00px;height:29.00px;background:#f2f5fc"></div>
<div class="b" style="left:1.00px;top:242.00px;width:1242.00px;height:1.00px;background:#d3dae6"></div>
<div class="b" style="left:1.00px;top:273.00px;width:1242.00px;height:1.00px;background:#d3dae6"></div>
<div class="b" style="left:1.00px;top:274.00px;width:1242.00px;height:29.00px;background:#f2f5fc"></div>
<div class="b" style="left:1.00px;top:303.00px;width:1242.00px;height:1.00px;background:#d3dae6"></div>
<div class="b" style="left:1.00px;top:333.00px;width:1242.00px;height:1.00px;background:#d3dae6"></div>
<div class="b" style="left:1.00px;top:334.00px;width:1242.00px;height:30.00px;background:#f2f5fc"></div>
<div class="b" style="left:1.00px;top:364.00px;width:1242.00px;height:1.00px;background:#d3dae6"></div>
<div class="b" style="left:1.00px;top:394.00px;width:1242.00px;height:1.00px;background:#d3dae6"></div>
<div class="b" style="left:1.00px;top:395.00px;width:1242.00px;height:30.00px;background:#f2f5fc"></div>
<div class="b" style="left:1.00px;top:425.00px;width:1242.00px;height:1.00px;background:#d3dae6"></div>
</div>
<div class="b" style="left:0;top:402px;width:1597px;height:408px;overflow:hidden"><div class="b" style="left:0;top:-402px;width:1597px;height:844px">
<div class="b" style="left:349.20px;top:407.00px;width:17.60px;height:17.60px;background:#fff;border:1px solid #8e9099;border-radius:4.5px"></div>
<svg class="b" style="left:378.60px;top:411.50px;" width="12.60" height="12.60" viewBox="0 0 12.600 12.600"><path d="M1.800 10.800L10.800 1.800" stroke="#5f636e" stroke-width="1"/><path d="M8 .8h3.800v3.800M4.600 11.800h-3.800v-3.800" fill="none" stroke="#5f636e" stroke-width="1" transform="translate(0 0)"/></svg>
<svg class="b" style="left:405.80px;top:411.90px;" width="12.40" height="12.40" viewBox="0 0 12.400 12.400"><path d="M.6 .6h9.300v5M.6 .6v10h5" fill="none" stroke="#343741" stroke-width="1.200"/><path d="M2.400 3h5.600M2.400 5.400h3.600M2.400 7.800h2.600" stroke="#343741" stroke-width="1"/><circle cx="8.700" cy="8.700" r="3.700" fill="#343741"/><path d="M7.300 7.300l2.800 2.800M10.100 7.300l-2.800 2.800" stroke="#fff" stroke-width=".9"/></svg>
<svg class="b" style="left:432.00px;top:411.00px;" width="13.20" height="13.20" viewBox="0 0 13.200 13.200"><rect x=".5" y=".5" width="12.200" height="12.200" fill="#fff" stroke="#b3bccd" stroke-width="1"/><path d="M2.300 3.200h8.600" stroke="#cdd3e0" stroke-width="1.400"/><path d="M3 5.800h5" stroke="#9fb2d0" stroke-width="1"/><path d="M4.400 8.200h4" stroke="#cdd3e0" stroke-width="1.400"/><path d="M7 10.700h5" stroke="#9fb2d0" stroke-width="1"/></svg>
<div class="t m" style="left:456.90px;top:408.90px;font-size:12.40px;line-height:17px;letter-spacing:0.000px;font-weight:400;color:#383b45;letter-spacing:0.637px;-webkit-text-stroke:0.12px #383b45">Nov 1, 2024 @ 13:32:29.165</div>
<div class="b" style="left:695.40px;top:406.10px;width:150.30px;height:22.00px;background:#fff;border:1px solid #d3dae6;border-radius:3.4px"></div>
<svg class="b" style="left:707.40px;top:410.30px;" width="12.80" height="13.80" viewBox="0 0 12.800 13.800"><path d="M6.400 .7l5.500 3.100v6.200l-5.500 3.100L.9 10V3.800z" fill="none" stroke="#7b7f8a" stroke-width=".9"/></svg>
<div class="t s" style="left:727.60px;top:407.30px;font-size:14.00px;line-height:20px;letter-spacing:0.559px;font-weight:400;color:#000;-webkit-text-stroke:0.3px #000">packetbeat-eth0</div>
<div class="b" style="left:855.30px;top:406.10px;width:147.30px;height:22.00px;background:#fff;border:1px solid #d3dae6;border-radius:3.4px"></div>
<div class="t s" style="left:865.80px;top:407.30px;font-size:14.00px;line-height:20px;letter-spacing:0.137px;font-weight:400;color:#000;-webkit-text-stroke:0.3px #000">k8s-stan…1b4-jl2k2</div>
<div class="b" style="left:1012.20px;top:406.10px;width:147.30px;height:22.00px;background:#fff;border:1px solid #d3dae6;border-radius:3.4px"></div>
<div class="t s" style="left:1023.00px;top:407.30px;font-size:14.00px;line-height:20px;letter-spacing:0.219px;font-weight:400;color:#000;-webkit-text-stroke:0.3px #000">709656…24200901</div>
<div class="t m" style="left:1168.90px;top:408.90px;font-size:12.40px;line-height:17px;letter-spacing:0.000px;font-weight:400;color:#383b45;letter-spacing:0.637px;-webkit-text-stroke:0.12px #383b45">data message, but received command of type 90","se…</div>
<div class="b" style="left:349.20px;top:437.00px;width:17.60px;height:17.60px;background:#fff;border:1px solid #8e9099;border-radius:4.5px"></div>
<svg class="b" style="left:378.60px;top:442.00px;" width="12.60" height="12.60" viewBox="0 0 12.600 12.600"><path d="M1.800 10.800L10.800 1.800" stroke="#5f636e" stroke-width="1"/><path d="M8 .8h3.800v3.800M4.600 11.800h-3.800v-3.800" fill="none" stroke="#5f636e" stroke-width="1" transform="translate(0 0)"/></svg>
<svg class="b" style="left:405.80px;top:442.40px;" width="12.40" height="12.40" viewBox="0 0 12.400 12.400"><path d="M.6 .6h9.300v5M.6 .6v10h5" fill="none" stroke="#343741" stroke-width="1.200"/><path d="M2.400 3h5.600M2.400 5.400h3.600M2.400 7.800h2.600" stroke="#343741" stroke-width="1"/><circle cx="8.700" cy="8.700" r="3.700" fill="#343741"/><path d="M7.300 7.300l2.800 2.800M10.100 7.300l-2.800 2.800" stroke="#fff" stroke-width=".9"/></svg>
<svg class="b" style="left:432.00px;top:441.50px;" width="13.20" height="13.20" viewBox="0 0 13.200 13.200"><rect x=".5" y=".5" width="12.200" height="12.200" fill="#fff" stroke="#b3bccd" stroke-width="1"/><path d="M2.300 3.200h8.600" stroke="#cdd3e0" stroke-width="1.400"/><path d="M3 5.800h5" stroke="#9fb2d0" stroke-width="1"/><path d="M4.400 8.200h4" stroke="#cdd3e0" stroke-width="1.400"/><path d="M7 10.700h5" stroke="#9fb2d0" stroke-width="1"/></svg>
<div class="t m" style="left:456.90px;top:439.40px;font-size:12.40px;line-height:17px;letter-spacing:0.000px;font-weight:400;color:#383b45;letter-spacing:0.637px;-webkit-text-stroke:0.12px #383b45">Nov 1, 2024 @ 13:32:29.164</div>
<div class="b" style="left:695.40px;top:436.60px;width:150.30px;height:22.00px;background:#fff;border:1px solid #d3dae6;border-radius:3.4px"></div>
<svg class="b" style="left:707.40px;top:440.80px;" width="12.80" height="13.80" viewBox="0 0 12.800 13.800"><path d="M6.400 .7l5.500 3.100v6.200l-5.500 3.100L.9 10V3.800z" fill="none" stroke="#7b7f8a" stroke-width=".9"/></svg>
<div class="t s" style="left:727.60px;top:437.80px;font-size:14.00px;line-height:20px;letter-spacing:0.559px;font-weight:400;color:#000;-webkit-text-stroke:0.3px #000">packetbeat-eth0</div>
<div class="b" style="left:855.30px;top:436.60px;width:147.30px;height:22.00px;background:#fff;border:1px solid #d3dae6;border-radius:3.4px"></div>
<div class="t s" style="left:865.80px;top:437.80px;font-size:14.00px;line-height:20px;letter-spacing:0.137px;font-weight:400;color:#000;-webkit-text-stroke:0.3px #000">k8s-stan…1b4-jl2k2</div>
<div class="b" style="left:1012.20px;top:436.60px;width:147.30px;height:22.00px;background:#fff;border:1px solid #d3dae6;border-radius:3.4px"></div>
<div class="t s" style="left:1023.00px;top:437.80px;font-size:14.00px;line-height:20px;letter-spacing:0.219px;font-weight:400;color:#000;-webkit-text-stroke:0.3px #000">709656…24200901</div>
<div class="t m" style="left:1168.90px;top:439.40px;font-size:12.40px;line-height:17px;letter-spacing:0.000px;font-weight:400;color:#383b45;letter-spacing:0.637px;-webkit-text-stroke:0.12px #383b45">data message, but received command of type 90","se…</div>
<div class="b" style="left:349.20px;top:467.00px;width:17.60px;height:17.60px;background:#fff;border:1px solid #8e9099;border-radius:4.5px"></div>
<svg class="b" style="left:378.60px;top:472.00px;" width="12.60" height="12.60" viewBox="0 0 12.600 12.600"><path d="M1.800 10.800L10.800 1.800" stroke="#5f636e" stroke-width="1"/><path d="M8 .8h3.800v3.800M4.600 11.800h-3.800v-3.800" fill="none" stroke="#5f636e" stroke-width="1" transform="translate(0 0)"/></svg>
<svg class="b" style="left:405.80px;top:472.40px;" width="12.40" height="12.40" viewBox="0 0 12.400 12.400"><path d="M.6 .6h9.300v5M.6 .6v10h5" fill="none" stroke="#343741" stroke-width="1.200"/><path d="M2.400 3h5.600M2.400 5.400h3.600M2.400 7.800h2.600" stroke="#343741" stroke-width="1"/><circle cx="8.700" cy="8.700" r="3.700" fill="#343741"/><path d="M7.300 7.300l2.800 2.800M10.100 7.300l-2.800 2.800" stroke="#fff" stroke-width=".9"/></svg>
<svg class="b" style="left:432.00px;top:471.50px;" width="13.20" height="13.20" viewBox="0 0 13.200 13.200"><rect x=".5" y=".5" width="12.200" height="12.200" fill="#fff" stroke="#b3bccd" stroke-width="1"/><path d="M2.300 3.200h8.600" stroke="#cdd3e0" stroke-width="1.400"/><path d="M3 5.800h5" stroke="#9fb2d0" stroke-width="1"/><path d="M4.400 8.200h4" stroke="#cdd3e0" stroke-width="1.400"/><path d="M7 10.700h5" stroke="#9fb2d0" stroke-width="1"/></svg>
<div class="t m" style="left:456.90px;top:469.40px;font-size:12.40px;line-height:17px;letter-spacing:0.000px;font-weight:400;color:#383b45;letter-spacing:0.637px;-webkit-text-stroke:0.12px #383b45">Nov 1, 2024 @ 13:32:27.416</div>
<div class="b" style="left:695.40px;top:466.60px;width:152.80px;height:22.00px;background:#fff;border:1px solid #d3dae6;border-radius:3.4px"></div>
<svg class="b" style="left:707.40px;top:470.80px;" width="12.80" height="13.80" viewBox="0 0 12.800 13.800"><path d="M6.400 .7l5.500 3.100v6.200l-5.500 3.100L.9 10V3.800z" fill="none" stroke="#7b7f8a" stroke-width=".9"/></svg>
<div class="t s" style="left:727.60px;top:467.80px;font-size:14.00px;line-height:20px;letter-spacing:0.340px;font-weight:400;color:#000;-webkit-text-stroke:0.3px #000">haproxy-loadgen</div>
<div class="b" style="left:857.40px;top:466.60px;width:147.90px;height:22.00px;background:#fff;border:1px solid #d3dae6;border-radius:3.4px"></div>
<div class="t s" style="left:866.70px;top:467.80px;font-size:14.00px;line-height:20px;letter-spacing:0.266px;font-weight:400;color:#000;-webkit-text-stroke:0.3px #000">k8s-sta…1b4-tmzk9</div>
<div class="b" style="left:1015.20px;top:466.60px;width:150.80px;height:22.00px;background:#fff;border:1px solid #d3dae6;border-radius:3.4px"></div>
<div class="t s" style="left:1025.70px;top:467.80px;font-size:14.00px;line-height:20px;letter-spacing:0.419px;font-weight:400;color:#000;-webkit-text-stroke:0.3px #000">675048…08434636</div>
<div class="t m" style="left:1175.40px;top:469.40px;font-size:12.40px;line-height:17px;letter-spacing:0.000px;font-weight:400;color:#383b45;letter-spacing:0.637px;-webkit-text-stroke:0.12px #383b45">to host haproxy left intact</div>
<div class="b" style="left:349.20px;top:498.00px;width:17.60px;height:17.60px;background:#fff;border:1px solid #8e9099;border-radius:4.5px"></div>
<svg class="b" style="left:378.60px;top:502.50px;" width="12.60" height="12.60" viewBox="0 0 12.600 12.600"><path d="M1.800 10.800L10.800 1.800" stroke="#5f636e" stroke-width="1"/><path d="M8 .8h3.800v3.800M4.600 11.800h-3.800v-3.800" fill="none" stroke="#5f636e" stroke-width="1" transform="translate(0 0)"/></svg>
<svg class="b" style="left:405.80px;top:502.90px;" width="12.40" height="12.40" viewBox="0 0 12.400 12.400"><path d="M.6 .6h9.300v5M.6 .6v10h5" fill="none" stroke="#343741" stroke-width="1.200"/><path d="M2.400 3h5.600M2.400 5.400h3.600M2.400 7.800h2.600" stroke="#343741" stroke-width="1"/><circle cx="8.700" cy="8.700" r="3.700" fill="#343741"/><path d="M7.300 7.300l2.800 2.800M10.100 7.300l-2.800 2.800" stroke="#fff" stroke-width=".9"/></svg>
<svg class="b" style="left:432.00px;top:502.00px;" width="13.20" height="13.20" viewBox="0 0 13.200 13.200"><rect x=".5" y=".5" width="12.200" height="12.200" fill="#fff" stroke="#b3bccd" stroke-width="1"/><path d="M2.300 3.200h8.600" stroke="#cdd3e0" stroke-width="1.400"/><path d="M3 5.800h5" stroke="#9fb2d0" stroke-width="1"/><path d="M4.400 8.200h4" stroke="#cdd3e0" stroke-width="1.400"/><path d="M7 10.700h5" stroke="#9fb2d0" stroke-width="1"/></svg>
<div class="t m" style="left:456.90px;top:499.90px;font-size:12.40px;line-height:17px;letter-spacing:0.000px;font-weight:400;color:#383b45;letter-spacing:0.637px;-webkit-text-stroke:0.12px #383b45">Nov 1, 2024 @ 13:32:27.416</div>
<div class="b" style="left:695.40px;top:497.10px;width:152.80px;height:22.00px;background:#fff;border:1px solid #d3dae6;border-radius:3.4px"></div>
<svg class="b" style="left:707.40px;top:501.30px;" width="12.80" height="13.80" viewBox="0 0 12.800 13.800"><path d="M6.400 .7l5.500 3.100v6.200l-5.500 3.100L.9 10V3.800z" fill="none" stroke="#7b7f8a" stroke-width=".9"/></svg>
<div class="t s" style="left:727.60px;top:498.30px;font-size:14.00px;line-height:20px;letter-spacing:0.340px;font-weight:400;color:#000;-webkit-text-stroke:0.3px #000">haproxy-loadgen</div>
<div class="b" style="left:857.40px;top:497.10px;width:147.90px;height:22.00px;background:#fff;border:1px solid #d3dae6;border-radius:3.4px"></div>
<div class="t s" style="left:866.70px;top:498.30px;font-size:14.00px;line-height:20px;letter-spacing:0.266px;font-weight:400;color:#000;-webkit-text-stroke:0.3px #000">k8s-sta…1b4-tmzk9</div>
<div class="b" style="left:1015.20px;top:497.10px;width:150.80px;height:22.00px;background:#fff;border:1px solid #d3dae6;border-radius:3.4px"></div>
<div class="t s" style="left:1025.70px;top:498.30px;font-size:14.00px;line-height:20px;letter-spacing:0.419px;font-weight:400;color:#000;-webkit-text-stroke:0.3px #000">675048…08434636</div>
<div class="t m" style="left:1175.40px;top:499.90px;font-size:12.40px;line-height:17px;letter-spacing:0.000px;font-weight:400;color:#383b45;letter-spacing:0.637px;-webkit-text-stroke:0.12px #383b45">121 100 121 0 0 37600 0 --:--:-- --:--:-- --:--:-…</div>
<div class="b" style="left:349.20px;top:528.00px;width:17.60px;height:17.60px;background:#fff;border:1px solid #8e9099;border-radius:4.5px"></div>
<svg class="b" style="left:378.60px;top:533.00px;" width="12.60" height="12.60" viewBox="0 0 12.600 12.600"><path d="M1.800 10.800L10.800 1.800" stroke="#5f636e" stroke-width="1"/><path d="M8 .8h3.800v3.800M4.600 11.800h-3.800v-3.800" fill="none" stroke="#5f636e" stroke-width="1" transform="translate(0 0)"/></svg>
<svg class="b" style="left:405.80px;top:533.40px;" width="12.40" height="12.40" viewBox="0 0 12.400 12.400"><path d="M.6 .6h9.300v5M.6 .6v10h5" fill="none" stroke="#343741" stroke-width="1.200"/><path d="M2.400 3h5.600M2.400 5.400h3.600M2.400 7.800h2.600" stroke="#343741" stroke-width="1"/><circle cx="8.700" cy="8.700" r="3.700" fill="#343741"/><path d="M7.300 7.300l2.800 2.800M10.100 7.300l-2.800 2.800" stroke="#fff" stroke-width=".9"/></svg>
<svg class="b" style="left:432.00px;top:532.50px;" width="13.20" height="13.20" viewBox="0 0 13.200 13.200"><rect x=".5" y=".5" width="12.200" height="12.200" fill="#fff" stroke="#b3bccd" stroke-width="1"/><path d="M2.300 3.200h8.600" stroke="#cdd3e0" stroke-width="1.400"/><path d="M3 5.800h5" stroke="#9fb2d0" stroke-width="1"/><path d="M4.400 8.200h4" stroke="#cdd3e0" stroke-width="1.400"/><path d="M7 10.700h5" stroke="#9fb2d0" stroke-width="1"/></svg>
<div class="t m" style="left:456.90px;top:530.40px;font-size:12.40px;line-height:17px;letter-spacing:0.000px;font-weight:400;color:#383b45;letter-spacing:0.637px;-webkit-text-stroke:0.12px #383b45">Nov 1, 2024 @ 13:32:27.416</div>
<div class="b" style="left:695.40px;top:527.60px;width:152.80px;height:22.00px;background:#fff;border:1px solid #d3dae6;border-radius:3.4px"></div>
<svg class="b" style="left:707.40px;top:531.80px;" width="12.80" height="13.80" viewBox="0 0 12.800 13.800"><path d="M6.400 .7l5.500 3.100v6.200l-5.500 3.100L.9 10V3.800z" fill="none" stroke="#7b7f8a" stroke-width=".9"/></svg>
<div class="t s" style="left:727.60px;top:528.80px;font-size:14.00px;line-height:20px;letter-spacing:0.340px;font-weight:400;color:#000;-webkit-text-stroke:0.3px #000">haproxy-loadgen</div>
<div class="b" style="left:857.40px;top:527.60px;width:147.90px;height:22.00px;background:#fff;border:1px solid #d3dae6;border-radius:3.4px"></div>
<div class="t s" style="left:866.70px;top:528.80px;font-size:14.00px;line-height:20px;letter-spacing:0.266px;font-weight:400;color:#000;-webkit-text-stroke:0.3px #000">k8s-sta…1b4-tmzk9</div>
<div class="b" style="left:1015.20px;top:527.60px;width:150.80px;height:22.00px;background:#fff;border:1px solid #d3dae6;border-radius:3.4px"></div>
<div class="t s" style="left:1025.70px;top:528.80px;font-size:14.00px;line-height:20px;letter-spacing:0.419px;font-weight:400;color:#000;-webkit-text-stroke:0.3px #000">675048…08434636</div>
<div class="t m" style="left:1175.40px;top:530.40px;font-size:12.40px;line-height:17px;letter-spacing:0.000px;font-weight:400;color:#383b45;letter-spacing:0.637px;-webkit-text-stroke:0.12px #383b45">data]</div>
<div class="b" style="left:349.20px;top:559.00px;width:17.60px;height:17.60px;background:#fff;border:1px solid #8e9099;border-radius:4.5px"></div>
<svg class="b" style="left:378.60px;top:563.50px;" width="12.60" height="12.60" viewBox="0 0 12.600 12.600"><path d="M1.800 10.800L10.800 1.800" stroke="#5f636e" stroke-width="1"/><path d="M8 .8h3.800v3.800M4.600 11.800h-3.800v-3.800" fill="none" stroke="#5f636e" stroke-width="1" transform="translate(0 0)"/></svg>
<svg class="b" style="left:405.80px;top:563.90px;" width="12.40" height="12.40" viewBox="0 0 12.400 12.400"><path d="M.6 .6h9.300v5M.6 .6v10h5" fill="none" stroke="#343741" stroke-width="1.200"/><path d="M2.400 3h5.600M2.400 5.400h3.600M2.400 7.800h2.600" stroke="#343741" stroke-width="1"/><circle cx="8.700" cy="8.700" r="3.700" fill="#343741"/><path d="M7.300 7.300l2.800 2.800M10.100 7.300l-2.800 2.800" stroke="#fff" stroke-width=".9"/></svg>
<svg class="b" style="left:432.00px;top:563.00px;" width="13.20" height="13.20" viewBox="0 0 13.200 13.200"><rect x=".5" y=".5" width="12.200" height="12.200" fill="#fff" stroke="#b3bccd" stroke-width="1"/><path d="M2.300 3.200h8.600" stroke="#cdd3e0" stroke-width="1.400"/><path d="M3 5.800h5" stroke="#9fb2d0" stroke-width="1"/><path d="M4.400 8.200h4" stroke="#cdd3e0" stroke-width="1.400"/><path d="M7 10.700h5" stroke="#9fb2d0" stroke-width="1"/></svg>
<div class="t m" style="left:456.90px;top:560.90px;font-size:12.40px;line-height:17px;letter-spacing:0.000px;font-weight:400;color:#383b45;letter-spacing:0.637px;-webkit-text-stroke:0.12px #383b45">Nov 1, 2024 @ 13:32:27.416</div>
<div class="b" style="left:695.40px;top:558.10px;width:152.80px;height:22.00px;background:#fff;border:1px solid #d3dae6;border-radius:3.4px"></div>
<svg class="b" style="left:707.40px;top:562.30px;" width="12.80" height="13.80" viewBox="0 0 12.800 13.800"><path d="M6.400 .7l5.500 3.100v6.200l-5.500 3.100L.9 10V3.800z" fill="none" stroke="#7b7f8a" stroke-width=".9"/></svg>
<div class="t s" style="left:727.60px;top:559.30px;font-size:14.00px;line-height:20px;letter-spacing:0.340px;font-weight:400;color:#000;-webkit-text-stroke:0.3px #000">haproxy-loadgen</div>
<div class="b" style="left:857.40px;top:558.10px;width:147.90px;height:22.00px;background:#fff;border:1px solid #d3dae6;border-radius:3.4px"></div>
<div class="t s" style="left:866.70px;top:559.30px;font-size:14.00px;line-height:20px;letter-spacing:0.266px;font-weight:400;color:#000;-webkit-text-stroke:0.3px #000">k8s-sta…1b4-tmzk9</div>
<div class="b" style="left:1015.20px;top:558.10px;width:150.80px;height:22.00px;background:#fff;border:1px solid #d3dae6;border-radius:3.4px"></div>
<div class="t s" style="left:1025.70px;top:559.30px;font-size:14.00px;line-height:20px;letter-spacing:0.419px;font-weight:400;color:#000;-webkit-text-stroke:0.3px #000">675048…08434636</div>
<div class="t m" style="left:1175.40px;top:560.90px;font-size:12.40px;line-height:17px;letter-spacing:0.000px;font-weight:400;color:#383b45;letter-spacing:0.637px;-webkit-text-stroke:0.12px #383b45">&lt;</div>
<div class="b" style="left:349.20px;top:589.00px;width:17.60px;height:17.60px;background:#fff;border:1px solid #8e9099;border-radius:4.5px"></div>
<svg class="b" style="left:378.60px;top:594.00px;" width="12.60" height="12.60" viewBox="0 0 12.600 12.600"><path d="M1.800 10.800L10.800 1.800" stroke="#5f636e" stroke-width="1"/><path d="M8 .8h3.800v3.800M4.600 11.800h-3.800v-3.800" fill="none" stroke="#5f636e" stroke-width="1" transform="translate(0 0)"/></svg>
<svg class="b" style="left:405.80px;top:594.40px;" width="12.40" height="12.40" viewBox="0 0 12.400 12.400"><path d="M.6 .6h9.300v5M.6 .6v10h5" fill="none" stroke="#343741" stroke-width="1.200"/><path d="M2.400 3h5.600M2.400 5.400h3.600M2.400 7.800h2.600" stroke="#343741" stroke-width="1"/><circle cx="8.700" cy="8.700" r="3.700" fill="#343741"/><path d="M7.300 7.300l2.800 2.800M10.100 7.300l-2.800 2.800" stroke="#fff" stroke-width=".9"/></svg>
<svg class="b" style="left:432.00px;top:593.50px;" width="13.20" height="13.20" viewBox="0 0 13.200 13.200"><rect x=".5" y=".5" width="12.200" height="12.200" fill="#fff" stroke="#b3bccd" stroke-width="1"/><path d="M2.300 3.200h8.600" stroke="#cdd3e0" stroke-width="1.400"/><path d="M3 5.800h5" stroke="#9fb2d0" stroke-width="1"/><path d="M4.400 8.200h4" stroke="#cdd3e0" stroke-width="1.400"/><path d="M7 10.700h5" stroke="#9fb2d0" stroke-width="1"/></svg>
<div class="t m" style="left:456.90px;top:591.40px;font-size:12.40px;line-height:17px;letter-spacing:0.000px;font-weight:400;color:#383b45;letter-spacing:0.637px;-webkit-text-stroke:0.12px #383b45">Nov 1, 2024 @ 13:32:27.416</div>
<div class="b" style="left:695.40px;top:588.60px;width:152.80px;height:22.00px;background:#fff;border:1px solid #d3dae6;border-radius:3.4px"></div>
<svg class="b" style="left:707.40px;top:592.80px;" width="12.80" height="13.80" viewBox="0 0 12.800 13.800"><path d="M6.400 .7l5.500 3.100v6.200l-5.500 3.100L.9 10V3.800z" fill="none" stroke="#7b7f8a" stroke-width=".9"/></svg>
<div class="t s" style="left:727.60px;top:589.80px;font-size:14.00px;line-height:20px;letter-spacing:0.340px;font-weight:400;color:#000;-webkit-text-stroke:0.3px #000">haproxy-loadgen</div>
<div class="b" style="left:857.40px;top:588.60px;width:147.90px;height:22.00px;background:#fff;border:1px solid #d3dae6;border-radius:3.4px"></div>
<div class="t s" style="left:866.70px;top:589.80px;font-size:14.00px;line-height:20px;letter-spacing:0.266px;font-weight:400;color:#000;-webkit-text-stroke:0.3px #000">k8s-sta…1b4-tmzk9</div>
<div class="b" style="left:1015.20px;top:588.60px;width:150.80px;height:22.00px;background:#fff;border:1px solid #d3dae6;border-radius:3.4px"></div>
<div class="t s" style="left:1025.70px;top:589.80px;font-size:14.00px;line-height:20px;letter-spacing:0.419px;font-weight:400;color:#000;-webkit-text-stroke:0.3px #000">675048…08434636</div>
<div class="t m" style="left:1175.40px;top:591.40px;font-size:12.40px;line-height:17px;letter-spacing:0.000px;font-weight:400;color:#383b45;letter-spacing:0.637px;-webkit-text-stroke:0.12px #383b45">&lt; content-type: text/html</div>
<div class="b" style="left:349.20px;top:619.00px;width:17.60px;height:17.60px;background:#fff;border:1px solid #8e9099;border-radius:4.5px"></div>
<svg class="b" style="left:378.60px;top:624.00px;" width="12.60" height="12.60" viewBox="0 0 12.600 12.600"><path d="M1.800 10.800L10.800 1.800" stroke="#5f636e" stroke-width="1"/><path d="M8 .8h3.800v3.800M4.600 11.800h-3.800v-3.800" fill="none" stroke="#5f636e" stroke-width="1" transform="translate(0 0)"/></svg>
<svg class="b" style="left:405.80px;top:624.40px;" width="12.40" height="12.40" viewBox="0 0 12.400 12.400"><path d="M.6 .6h9.300v5M.6 .6v10h5" fill="none" stroke="#343741" stroke-width="1.200"/><path d="M2.400 3h5.600M2.400 5.400h3.600M2.400 7.800h2.600" stroke="#343741" stroke-width="1"/><circle cx="8.700" cy="8.700" r="3.700" fill="#343741"/><path d="M7.300 7.300l2.800 2.800M10.100 7.300l-2.800 2.800" stroke="#fff" stroke-width=".9"/></svg>
<svg class="b" style="left:432.00px;top:623.50px;" width="13.20" height="13.20" viewBox="0 0 13.200 13.200"><rect x=".5" y=".5" width="12.200" height="12.200" fill="#fff" stroke="#b3bccd" stroke-width="1"/><path d="M2.300 3.200h8.600" stroke="#cdd3e0" stroke-width="1.400"/><path d="M3 5.800h5" stroke="#9fb2d0" stroke-width="1"/><path d="M4.400 8.200h4" stroke="#cdd3e0" stroke-width="1.400"/><path d="M7 10.700h5" stroke="#9fb2d0" stroke-width="1"/></svg>
<div class="t m" style="left:456.90px;top:621.40px;font-size:12.40px;line-height:17px;letter-spacing:0.000px;font-weight:400;color:#383b45;letter-spacing:0.637px;-webkit-text-stroke:0.12px #383b45">Nov 1, 2024 @ 13:32:27.416</div>
<div class="b" style="left:695.40px;top:618.60px;width:152.80px;height:22.00px;background:#fff;border:1px solid #d3dae6;border-radius:3.4px"></div>
<svg class="b" style="left:707.40px;top:622.80px;" width="12.80" height="13.80" viewBox="0 0 12.800 13.800"><path d="M6.400 .7l5.500 3.100v6.200l-5.500 3.100L.9 10V3.800z" fill="none" stroke="#7b7f8a" stroke-width=".9"/></svg>
<div class="t s" style="left:727.60px;top:619.80px;font-size:14.00px;line-height:20px;letter-spacing:0.340px;font-weight:400;color:#000;-webkit-text-stroke:0.3px #000">haproxy-loadgen</div>
<div class="b" style="left:857.40px;top:618.60px;width:147.90px;height:22.00px;background:#fff;border:1px solid #d3dae6;border-radius:3.4px"></div>
<div class="t s" style="left:866.70px;top:619.80px;font-size:14.00px;line-height:20px;letter-spacing:0.266px;font-weight:400;color:#000;-webkit-text-stroke:0.3px #000">k8s-sta…1b4-tmzk9</div>
<div class="b" style="left:1015.20px;top:618.60px;width:150.80px;height:22.00px;background:#fff;border:1px solid #d3dae6;border-radius:3.4px"></div>
<div class="t s" style="left:1025.70px;top:619.80px;font-size:14.00px;line-height:20px;letter-spacing:0.419px;font-weight:400;color:#000;-webkit-text-stroke:0.3px #000">675048…08434636</div>
<div class="t m" style="left:1175.40px;top:621.40px;font-size:12.40px;line-height:17px;letter-spacing:0.000px;font-weight:400;color:#383b45;letter-spacing:0.637px;-webkit-text-stroke:0.12px #383b45">&lt; vary: Accept-Encoding</div>
<div class="b" style="left:349.20px;top:650.00px;width:17.60px;height:17.60px;background:#fff;border:1px solid #8e9099;border-radius:4.5px"></div>
<svg class="b" style="left:378.60px;top:654.50px;" width="12.60" height="12.60" viewBox="0 0 12.600 12.600"><path d="M1.800 10.800L10.800 1.800" stroke="#5f636e" stroke-width="1"/><path d="M8 .8h3.800v3.800M4.600 11.800h-3.800v-3.800" fill="none" stroke="#5f636e" stroke-width="1" transform="translate(0 0)"/></svg>
<svg class="b" style="left:405.80px;top:654.90px;" width="12.40" height="12.40" viewBox="0 0 12.400 12.400"><path d="M.6 .6h9.300v5M.6 .6v10h5" fill="none" stroke="#343741" stroke-width="1.200"/><path d="M2.400 3h5.600M2.400 5.400h3.600M2.400 7.800h2.600" stroke="#343741" stroke-width="1"/><circle cx="8.700" cy="8.700" r="3.700" fill="#343741"/><path d="M7.300 7.300l2.800 2.800M10.100 7.300l-2.800 2.800" stroke="#fff" stroke-width=".9"/></svg>
<svg class="b" style="left:432.00px;top:654.00px;" width="13.20" height="13.20" viewBox="0 0 13.200 13.200"><rect x=".5" y=".5" width="12.200" height="12.200" fill="#fff" stroke="#b3bccd" stroke-width="1"/><path d="M2.300 3.200h8.600" stroke="#cdd3e0" stroke-width="1.400"/><path d="M3 5.800h5" stroke="#9fb2d0" stroke-width="1"/><path d="M4.400 8.200h4" stroke="#cdd3e0" stroke-width="1.400"/><path d="M7 10.700h5" stroke="#9fb2d0" stroke-width="1"/></svg>
<div class="t m" style="left:456.90px;top:651.90px;font-size:12.40px;line-height:17px;letter-spacing:0.000px;font-weight:400;color:#383b45;letter-spacing:0.637px;-webkit-text-stroke:0.12px #383b45">Nov 1, 2024 @ 13:32:27.416</div>
<div class="b" style="left:695.40px;top:649.10px;width:152.80px;height:22.00px;background:#fff;border:1px solid #d3dae6;border-radius:3.4px"></div>
<svg class="b" style="left:707.40px;top:653.30px;" width="12.80" height="13.80" viewBox="0 0 12.800 13.800"><path d="M6.400 .7l5.500 3.100v6.200l-5.500 3.100L.9 10V3.800z" fill="none" stroke="#7b7f8a" stroke-width=".9"/></svg>
<div class="t s" style="left:727.60px;top:650.30px;font-size:14.00px;line-height:20px;letter-spacing:0.340px;font-weight:400;color:#000;-webkit-text-stroke:0.3px #000">haproxy-loadgen</div>
<div class="b" style="left:857.40px;top:649.10px;width:147.90px;height:22.00px;background:#fff;border:1px solid #d3dae6;border-radius:3.4px"></div>
<div class="t s" style="left:866.70px;top:650.30px;font-size:14.00px;line-height:20px;letter-spacing:0.266px;font-weight:400;color:#000;-webkit-text-stroke:0.3px #000">k8s-sta…1b4-tmzk9</div>
<div class="b" style="left:1015.20px;top:649.10px;width:150.80px;height:22.00px;background:#fff;border:1px solid #d3dae6;border-radius:3.4px"></div>
<div class="t s" style="left:1025.70px;top:650.30px;font-size:14.00px;line-height:20px;letter-spacing:0.419px;font-weight:400;color:#000;-webkit-text-stroke:0.3px #000">675048…08434636</div>
<div class="t m" style="left:1175.40px;top:651.90px;font-size:12.40px;line-height:17px;letter-spacing:0.000px;font-weight:400;color:#383b45;letter-spacing:0.637px;-webkit-text-stroke:0.12px #383b45">&lt; content-length: 121</div>
<div class="b" style="left:349.20px;top:680.00px;width:17.60px;height:17.60px;background:#fff;border:1px solid #8e9099;border-radius:4.5px"></div>
<svg class="b" style="left:378.60px;top:685.00px;" width="12.60" height="12.60" viewBox="0 0 12.600 12.600"><path d="M1.800 10.800L10.800 1.800" stroke="#5f636e" stroke-width="1"/><path d="M8 .8h3.800v3.800M4.600 11.800h-3.800v-3.800" fill="none" stroke="#5f636e" stroke-width="1" transform="translate(0 0)"/></svg>
<svg class="b" style="left:405.80px;top:685.40px;" width="12.40" height="12.40" viewBox="0 0 12.400 12.400"><path d="M.6 .6h9.300v5M.6 .6v10h5" fill="none" stroke="#343741" stroke-width="1.200"/><path d="M2.400 3h5.600M2.400 5.400h3.600M2.400 7.800h2.600" stroke="#343741" stroke-width="1"/><circle cx="8.700" cy="8.700" r="3.700" fill="#343741"/><path d="M7.300 7.300l2.800 2.800M10.100 7.300l-2.800 2.800" stroke="#fff" stroke-width=".9"/></svg>
<svg class="b" style="left:432.00px;top:684.50px;" width="13.20" height="13.20" viewBox="0 0 13.200 13.200"><rect x=".5" y=".5" width="12.200" height="12.200" fill="#fff" stroke="#b3bccd" stroke-width="1"/><path d="M2.300 3.200h8.600" stroke="#cdd3e0" stroke-width="1.400"/><path d="M3 5.800h5" stroke="#9fb2d0" stroke-width="1"/><path d="M4.400 8.200h4" stroke="#cdd3e0" stroke-width="1.400"/><path d="M7 10.700h5" stroke="#9fb2d0" stroke-width="1"/></svg>
<div class="t m" style="left:456.90px;top:682.40px;font-size:12.40px;line-height:17px;letter-spacing:0.000px;font-weight:400;color:#383b45;letter-spacing:0.637px;-webkit-text-stroke:0.12px #383b45">Nov 1, 2024 @ 13:32:27.416</div>
<div class="b" style="left:695.40px;top:679.60px;width:152.80px;height:22.00px;background:#fff;border:1px solid #d3dae6;border-radius:3.4px"></div>
<svg class="b" style="left:707.40px;top:683.80px;" width="12.80" height="13.80" viewBox="0 0 12.800 13.800"><path d="M6.400 .7l5.500 3.100v6.200l-5.500 3.100L.9 10V3.800z" fill="none" stroke="#7b7f8a" stroke-width=".9"/></svg>
<div class="t s" style="left:727.60px;top:680.80px;font-size:14.00px;line-height:20px;letter-spacing:0.340px;font-weight:400;color:#000;-webkit-text-stroke:0.3px #000">haproxy-loadgen</div>
<div class="b" style="left:857.40px;top:679.60px;width:147.90px;height:22.00px;background:#fff;border:1px solid #d3dae6;border-radius:3.4px"></div>
<div class="t s" style="left:866.70px;top:680.80px;font-size:14.00px;line-height:20px;letter-spacing:0.266px;font-weight:400;color:#000;-webkit-text-stroke:0.3px #000">k8s-sta…1b4-tmzk9</div>
<div class="b" style="left:1015.20px;top:679.60px;width:150.80px;height:22.00px;background:#fff;border:1px solid #d3dae6;border-radius:3.4px"></div>
<div class="t s" style="left:1025.70px;top:680.80px;font-size:14.00px;line-height:20px;letter-spacing:0.419px;font-weight:400;color:#000;-webkit-text-stroke:0.3px #000">675048…08434636</div>
<div class="t m" style="left:1175.40px;top:682.40px;font-size:12.40px;line-height:17px;letter-spacing:0.000px;font-weight:400;color:#383b45;letter-spacing:0.637px;-webkit-text-stroke:0.12px #383b45">&lt; accept-ranges: bytes</div>
<div class="b" style="left:349.20px;top:710.00px;width:17.60px;height:17.60px;background:#fff;border:1px solid #8e9099;border-radius:4.5px"></div>
<svg class="b" style="left:378.60px;top:715.00px;" width="12.60" height="12.60" viewBox="0 0 12.600 12.600"><path d="M1.800 10.800L10.800 1.800" stroke="#5f636e" stroke-width="1"/><path d="M8 .8h3.800v3.800M4.600 11.800h-3.800v-3.800" fill="none" stroke="#5f636e" stroke-width="1" transform="translate(0 0)"/></svg>
<svg class="b" style="left:405.80px;top:715.40px;" width="12.40" height="12.40" viewBox="0 0 12.400 12.400"><path d="M.6 .6h9.300v5M.6 .6v10h5" fill="none" stroke="#343741" stroke-width="1.200"/><path d="M2.400 3h5.600M2.400 5.400h3.600M2.400 7.800h2.600" stroke="#343741" stroke-width="1"/><circle cx="8.700" cy="8.700" r="3.700" fill="#343741"/><path d="M7.300 7.300l2.800 2.800M10.100 7.300l-2.800 2.800" stroke="#fff" stroke-width=".9"/></svg>
<svg class="b" style="left:432.00px;top:714.50px;" width="13.20" height="13.20" viewBox="0 0 13.200 13.200"><rect x=".5" y=".5" width="12.200" height="12.200" fill="#fff" stroke="#b3bccd" stroke-width="1"/><path d="M2.300 3.200h8.600" stroke="#cdd3e0" stroke-width="1.400"/><path d="M3 5.800h5" stroke="#9fb2d0" stroke-width="1"/><path d="M4.400 8.200h4" stroke="#cdd3e0" stroke-width="1.400"/><path d="M7 10.700h5" stroke="#9fb2d0" stroke-width="1"/></svg>
<div class="t m" style="left:456.90px;top:712.40px;font-size:12.40px;line-height:17px;letter-spacing:0.000px;font-weight:400;color:#383b45;letter-spacing:0.637px;-webkit-text-stroke:0.12px #383b45">Nov 1, 2024 @ 13:32:27.416</div>
<div class="b" style="left:695.40px;top:709.60px;width:152.80px;height:22.00px;background:#fff;border:1px solid #d3dae6;border-radius:3.4px"></div>
<svg class="b" style="left:707.40px;top:713.80px;" width="12.80" height="13.80" viewBox="0 0 12.800 13.800"><path d="M6.400 .7l5.500 3.100v6.200l-5.500 3.100L.9 10V3.800z" fill="none" stroke="#7b7f8a" stroke-width=".9"/></svg>
<div class="t s" style="left:727.60px;top:710.80px;font-size:14.00px;line-height:20px;letter-spacing:0.340px;font-weight:400;color:#000;-webkit-text-stroke:0.3px #000">haproxy-loadgen</div>
<div class="b" style="left:857.40px;top:709.60px;width:147.90px;height:22.00px;background:#fff;border:1px solid #d3dae6;border-radius:3.4px"></div>
<div class="t s" style="left:866.70px;top:710.80px;font-size:14.00px;line-height:20px;letter-spacing:0.266px;font-weight:400;color:#000;-webkit-text-stroke:0.3px #000">k8s-sta…1b4-tmzk9</div>
<div class="b" style="left:1015.20px;top:709.60px;width:150.80px;height:22.00px;background:#fff;border:1px solid #d3dae6;border-radius:3.4px"></div>
<div class="t s" style="left:1025.70px;top:710.80px;font-size:14.00px;line-height:20px;letter-spacing:0.419px;font-weight:400;color:#000;-webkit-text-stroke:0.3px #000">675048…08434636</div>
<div class="t m" style="left:1175.40px;top:712.40px;font-size:12.40px;line-height:17px;letter-spacing:0.000px;font-weight:400;color:#383b45;letter-spacing:0.637px;-webkit-text-stroke:0.12px #383b45">&lt; etag: "79-6254ed73cda5c"</div>
<div class="b" style="left:349.20px;top:741.00px;width:17.60px;height:17.60px;background:#fff;border:1px solid #8e9099;border-radius:4.5px"></div>
<svg class="b" style="left:378.60px;top:745.50px;" width="12.60" height="12.60" viewBox="0 0 12.600 12.600"><path d="M1.800 10.800L10.800 1.800" stroke="#5f636e" stroke-width="1"/><path d="M8 .8h3.800v3.800M4.600 11.800h-3.800v-3.800" fill="none" stroke="#5f636e" stroke-width="1" transform="translate(0 0)"/></svg>
<svg class="b" style="left:405.80px;top:745.90px;" width="12.40" height="12.40" viewBox="0 0 12.400 12.400"><path d="M.6 .6h9.300v5M.6 .6v10h5" fill="none" stroke="#343741" stroke-width="1.200"/><path d="M2.400 3h5.600M2.400 5.400h3.600M2.400 7.800h2.600" stroke="#343741" stroke-width="1"/><circle cx="8.700" cy="8.700" r="3.700" fill="#343741"/><path d="M7.300 7.300l2.800 2.800M10.100 7.300l-2.800 2.800" stroke="#fff" stroke-width=".9"/></svg>
<svg class="b" style="left:432.00px;top:745.00px;" width="13.20" height="13.20" viewBox="0 0 13.200 13.200"><rect x=".5" y=".5" width="12.200" height="12.200" fill="#fff" stroke="#b3bccd" stroke-width="1"/><path d="M2.300 3.200h8.600" stroke="#cdd3e0" stroke-width="1.400"/><path d="M3 5.800h5" stroke="#9fb2d0" stroke-width="1"/><path d="M4.400 8.200h4" stroke="#cdd3e0" stroke-width="1.400"/><path d="M7 10.700h5" stroke="#9fb2d0" stroke-width="1"/></svg>
<div class="t m" style="left:456.90px;top:742.90px;font-size:12.40px;line-height:17px;letter-spacing:0.000px;font-weight:400;color:#383b45;letter-spacing:0.637px;-webkit-text-stroke:0.12px #383b45">Nov 1, 2024 @ 13:32:27.416</div>
<div class="b" style="left:695.40px;top:740.10px;width:152.80px;height:22.00px;background:#fff;border:1px solid #d3dae6;border-radius:3.4px"></div>
<svg class="b" style="left:707.40px;top:744.30px;" width="12.80" height="13.80" viewBox="0 0 12.800 13.800"><path d="M6.400 .7l5.500 3.100v6.200l-5.500 3.100L.9 10V3.800z" fill="none" stroke="#7b7f8a" stroke-width=".9"/></svg>
<div class="t s" style="left:727.60px;top:741.30px;font-size:14.00px;line-height:20px;letter-spacing:0.340px;font-weight:400;color:#000;-webkit-text-stroke:0.3px #000">haproxy-loadgen</div>
<div class="b" style="left:857.40px;top:740.10px;width:147.90px;height:22.00px;background:#fff;border:1px solid #d3dae6;border-radius:3.4px"></div>
<div class="t s" style="left:866.70px;top:741.30px;font-size:14.00px;line-height:20px;letter-spacing:0.266px;font-weight:400;color:#000;-webkit-text-stroke:0.3px #000">k8s-sta…1b4-tmzk9</div>
<div class="b" style="left:1015.20px;top:740.10px;width:150.80px;height:22.00px;background:#fff;border:1px solid #d3dae6;border-radius:3.4px"></div>
<div class="t s" style="left:1025.70px;top:741.30px;font-size:14.00px;line-height:20px;letter-spacing:0.419px;font-weight:400;color:#000;-webkit-text-stroke:0.3px #000">675048…08434636</div>
<div class="t m" style="left:1175.40px;top:742.90px;font-size:12.40px;line-height:17px;letter-spacing:0.000px;font-weight:400;color:#383b45;letter-spacing:0.637px;-webkit-text-stroke:0.12px #383b45">25 Oct 2024 15:33:29 GMT</div>
<div class="b" style="left:349.20px;top:771.00px;width:17.60px;height:17.60px;background:#fff;border:1px solid #8e9099;border-radius:4.5px"></div>
<svg class="b" style="left:378.60px;top:776.00px;" width="12.60" height="12.60" viewBox="0 0 12.600 12.600"><path d="M1.800 10.800L10.800 1.800" stroke="#5f636e" stroke-width="1"/><path d="M8 .8h3.800v3.800M4.600 11.800h-3.800v-3.800" fill="none" stroke="#5f636e" stroke-width="1" transform="translate(0 0)"/></svg>
<svg class="b" style="left:405.80px;top:776.40px;" width="12.40" height="12.40" viewBox="0 0 12.400 12.400"><path d="M.6 .6h9.300v5M.6 .6v10h5" fill="none" stroke="#343741" stroke-width="1.200"/><path d="M2.400 3h5.600M2.400 5.400h3.600M2.400 7.800h2.600" stroke="#343741" stroke-width="1"/><circle cx="8.700" cy="8.700" r="3.700" fill="#343741"/><path d="M7.300 7.300l2.800 2.800M10.100 7.300l-2.800 2.800" stroke="#fff" stroke-width=".9"/></svg>
<svg class="b" style="left:432.00px;top:775.50px;" width="13.20" height="13.20" viewBox="0 0 13.200 13.200"><rect x=".5" y=".5" width="12.200" height="12.200" fill="#fff" stroke="#b3bccd" stroke-width="1"/><path d="M2.300 3.200h8.600" stroke="#cdd3e0" stroke-width="1.400"/><path d="M3 5.800h5" stroke="#9fb2d0" stroke-width="1"/><path d="M4.400 8.200h4" stroke="#cdd3e0" stroke-width="1.400"/><path d="M7 10.700h5" stroke="#9fb2d0" stroke-width="1"/></svg>
<div class="t m" style="left:456.90px;top:773.40px;font-size:12.40px;line-height:17px;letter-spacing:0.000px;font-weight:400;color:#383b45;letter-spacing:0.637px;-webkit-text-stroke:0.12px #383b45">Nov 1, 2024 @ 13:32:27.416</div>
<div class="b" style="left:695.40px;top:770.60px;width:152.80px;height:22.00px;background:#fff;border:1px solid #d3dae6;border-radius:3.4px"></div>
<svg class="b" style="left:707.40px;top:774.80px;" width="12.80" height="13.80" viewBox="0 0 12.800 13.800"><path d="M6.400 .7l5.500 3.100v6.200l-5.500 3.100L.9 10V3.800z" fill="none" stroke="#7b7f8a" stroke-width=".9"/></svg>
<div class="t s" style="left:727.60px;top:771.80px;font-size:14.00px;line-height:20px;letter-spacing:0.340px;font-weight:400;color:#000;-webkit-text-stroke:0.3px #000">haproxy-loadgen</div>
<div class="b" style="left:857.40px;top:770.60px;width:147.90px;height:22.00px;background:#fff;border:1px solid #d3dae6;border-radius:3.4px"></div>
<div class="t s" style="left:866.70px;top:771.80px;font-size:14.00px;line-height:20px;letter-spacing:0.266px;font-weight:400;color:#000;-webkit-text-stroke:0.3px #000">k8s-sta…1b4-tmzk9</div>
<div class="b" style="left:1015.20px;top:770.60px;width:150.80px;height:22.00px;background:#fff;border:1px solid #d3dae6;border-radius:3.4px"></div>
<div class="t s" style="left:1025.70px;top:771.80px;font-size:14.00px;line-height:20px;letter-spacing:0.419px;font-weight:400;color:#000;-webkit-text-stroke:0.3px #000">675048…08434636</div>
<div class="t m" style="left:1175.40px;top:773.40px;font-size:12.40px;line-height:17px;letter-spacing:0.000px;font-weight:400;color:#383b45;letter-spacing:0.637px;-webkit-text-stroke:0.12px #383b45">&lt; server: Apache</div>
<div class="b" style="left:349.20px;top:802.00px;width:17.60px;height:17.60px;background:#fff;border:1px solid #8e9099;border-radius:4.5px"></div>
<svg class="b" style="left:378.60px;top:806.50px;" width="12.60" height="12.60" viewBox="0 0 12.600 12.600"><path d="M1.800 10.800L10.800 1.800" stroke="#5f636e" stroke-width="1"/><path d="M8 .8h3.800v3.800M4.600 11.800h-3.800v-3.800" fill="none" stroke="#5f636e" stroke-width="1" transform="translate(0 0)"/></svg>
<svg class="b" style="left:405.80px;top:806.90px;" width="12.40" height="12.40" viewBox="0 0 12.400 12.400"><path d="M.6 .6h9.300v5M.6 .6v10h5" fill="none" stroke="#343741" stroke-width="1.200"/><path d="M2.400 3h5.600M2.400 5.400h3.600M2.400 7.800h2.600" stroke="#343741" stroke-width="1"/><circle cx="8.700" cy="8.700" r="3.700" fill="#343741"/><path d="M7.300 7.300l2.800 2.800M10.100 7.300l-2.800 2.800" stroke="#fff" stroke-width=".9"/></svg>
<svg class="b" style="left:432.00px;top:806.00px;" width="13.20" height="13.20" viewBox="0 0 13.200 13.200"><rect x=".5" y=".5" width="12.200" height="12.200" fill="#fff" stroke="#b3bccd" stroke-width="1"/><path d="M2.300 3.200h8.600" stroke="#cdd3e0" stroke-width="1.400"/><path d="M3 5.800h5" stroke="#9fb2d0" stroke-width="1"/><path d="M4.400 8.200h4" stroke="#cdd3e0" stroke-width="1.400"/><path d="M7 10.700h5" stroke="#9fb2d0" stroke-width="1"/></svg>
<div class="t m" style="left:456.90px;top:803.90px;font-size:12.40px;line-height:17px;letter-spacing:0.000px;font-weight:400;color:#383b45;letter-spacing:0.637px;-webkit-text-stroke:0.12px #383b45">Nov 1, 2024 @ 13:32:27.416</div>
<div class="b" style="left:695.40px;top:801.10px;width:152.80px;height:22.00px;background:#fff;border:1px solid #d3dae6;border-radius:3.4px"></div>
<svg class="b" style="left:707.40px;top:805.30px;" width="12.80" height="13.80" viewBox="0 0 12.800 13.800"><path d="M6.400 .7l5.500 3.100v6.200l-5.500 3.100L.9 10V3.800z" fill="none" stroke="#7b7f8a" stroke-width=".9"/></svg>
<div class="t s" style="left:727.60px;top:802.30px;font-size:14.00px;line-height:20px;letter-spacing:0.340px;font-weight:400;color:#000;-webkit-text-stroke:0.3px #000">haproxy-loadgen</div>
<div class="b" style="left:857.40px;top:801.10px;width:147.90px;height:22.00px;background:#fff;border:1px solid #d3dae6;border-radius:3.4px"></div>
<div class="t s" style="left:866.70px;top:802.30px;font-size:14.00px;line-height:20px;letter-spacing:0.266px;font-weight:400;color:#000;-webkit-text-stroke:0.3px #000">k8s-sta…1b4-tmzk9</div>
<div class="b" style="left:1015.20px;top:801.10px;width:150.80px;height:22.00px;background:#fff;border:1px solid #d3dae6;border-radius:3.4px"></div>
<div class="t s" style="left:1025.70px;top:802.30px;font-size:14.00px;line-height:20px;letter-spacing:0.419px;font-weight:400;color:#000;-webkit-text-stroke:0.3px #000">675048…08434636</div>
<div class="t m" style="left:1175.40px;top:803.90px;font-size:12.40px;line-height:17px;letter-spacing:0.000px;font-weight:400;color:#383b45;letter-spacing:0.637px;-webkit-text-stroke:0.12px #383b45">01 Nov 2024 13:32:27 GMT</div>
</div></div>
<div class="b" style="left:1586.00px;top:369.00px;width:11.00px;height:441.00px;background:#fff"></div>
<svg class="b" style="left:1588.00px;top:376.20px;" width="9.00" height="6.00" viewBox="0 0 9 6"><path d="M1 5.500L4.500 2 8 5.500z" fill="#c6c9d2"/></svg>
<div class="b" style="left:1588.00px;top:386.50px;width:9.00px;height:59.50px;background:#adb0b9"></div>
<svg class="b" style="left:1588.00px;top:802.00px;" width="9.00" height="6.00" viewBox="0 0 9 6"><path d="M1 1L4.500 4.500 8 1z" fill="#b9bcc6"/></svg>
<div class="b" style="left:343.00px;top:809.60px;width:1254.00px;height:1.00px;background:#d3dae6"></div>
<div class="t s" style="left:353.20px;top:824.00px;font-size:14.00px;line-height:20px;letter-spacing:0.016px;font-weight:400;color:#343741;-webkit-text-stroke:0.3px #343741">Rows per page: 100</div>
<svg class="b" style="left:491.00px;top:830.50px;" width="10.50" height="7.00" viewBox="0 0 10.500 7"><path d="M.8 1l4.450 4.600L9.700 1" fill="none" stroke="#343741" stroke-width="1.300"/></svg>
<svg class="b" style="left:1417.50px;top:826.50px;" width="9.50" height="15.00" viewBox="0 0 9.500 15"><path d="M8.300 1L1.500 7.500l6.800 6.500" fill="none" stroke="#a2a8b5" stroke-width="1.400"/></svg>
<svg class="b" style="left:1581.20px;top:826.50px;" width="9.50" height="15.00" viewBox="0 0 9.500 15"><path d="M1.200 1L8 7.500 1.200 14" fill="none" stroke="#343741" stroke-width="1.500"/></svg>
<div class="t s" style="left:1443.60px;top:822.00px;font-size:16.40px;line-height:23px;letter-spacing:0.079px;font-weight:700;color:#0071c2;text-decoration:underline">1</div>
<div class="t s" style="left:1470.30px;top:822.00px;font-size:16.40px;line-height:23px;letter-spacing:0.579px;font-weight:400;color:#343741;-webkit-text-stroke:0.3px #343741">2</div>
<div class="t s" style="left:1498.30px;top:822.00px;font-size:16.40px;line-height:23px;letter-spacing:0.579px;font-weight:400;color:#343741;-webkit-text-stroke:0.3px #343741">3</div>
<div class="t s" style="left:1525.60px;top:822.00px;font-size:16.40px;line-height:23px;letter-spacing:1.279px;font-weight:400;color:#343741;-webkit-text-stroke:0.3px #343741">4</div>
<div class="t s" style="left:1554.00px;top:822.00px;font-size:16.40px;line-height:23px;letter-spacing:-0.121px;font-weight:400;color:#343741;-webkit-text-stroke:0.3px #343741">5</div>
</div></body></html>
